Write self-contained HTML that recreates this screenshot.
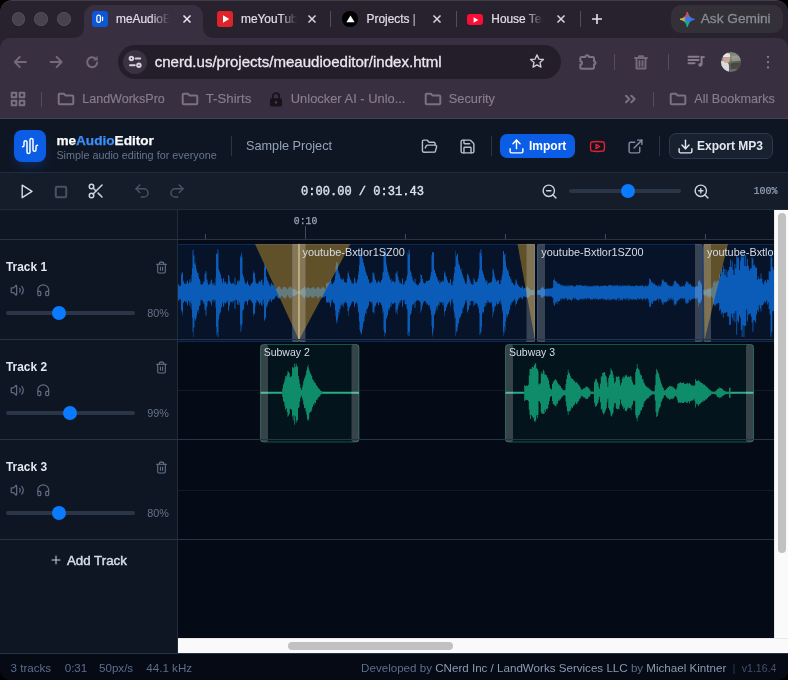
<!DOCTYPE html>
<html><head><meta charset="utf-8"><title>meAudioEditor</title>
<style>
*{box-sizing:border-box;margin:0;padding:0}
html,body{width:788px;height:680px;overflow:hidden;background:#000}
body{font-family:"Liberation Sans",sans-serif;position:relative}
#win{will-change:transform;position:absolute;left:0;top:0;width:788px;height:680px;border-radius:12px 12px 10px 10px;overflow:hidden;background:#060b16}
.abs{position:absolute}
svg{position:absolute;overflow:visible}
.ic{fill:none;stroke-width:2;stroke-linecap:round;stroke-linejoin:round}
.t{position:absolute;white-space:nowrap;line-height:1}
/* chrome */
#tabstrip{left:0;top:0;width:788px;height:52px;background:#28222e}
#toolbar{left:0;top:38px;width:788px;height:81px;background:#382f40;border-radius:10px 10px 0 0}
#chromeline{left:0;top:118px;width:788px;height:1px;background:#4a414f}
.tab{font-size:11.9px;color:#e2dce8;top:13.6px;-webkit-text-stroke:.2px #e2dce8}
.bm{font-size:12.4px;color:#877e90;top:92.5px;-webkit-text-stroke:.15px #877e90}
.sep{position:absolute;width:1px;background:#564c5e}
/* app */
#hdr{left:0;top:119px;width:788px;height:54px;background:#0f1623;border-bottom:1px solid #202c3e}
#tb{left:0;top:173px;width:788px;height:37px;background:#151d2b;border-bottom:1px solid #202c3e}
#left{left:0;top:210px;width:178px;height:443px;background:#0f1623;border-right:1px solid #202c3e}
#tl{left:178px;top:210px;width:596px;height:428px;background:#050a17;overflow:hidden}
.hl{position:absolute;left:0;width:788px;height:1px;background:#1d2a3c}
.tname{font-size:11.9px;font-weight:bold;color:#e2e8f0;left:6px}
.pct{font-size:10.8px;color:#64748b;left:147.3px}
.strk{position:absolute;left:6px;width:129px;height:4px;border-radius:2px;background:#2a3647}
.thumb{position:absolute;width:14px;height:14px;border-radius:7px;background:#0a7aff}
#status{left:0;top:653px;width:788px;height:27px;background:#050a15;border-top:1px solid #25344b}
.st{font-size:11.6px;color:#5d6e8c;top:661.5px}
.st b{font-weight:normal;color:#8a9ab3}
</style></head><body>
<div id="win">
<div id="tabstrip" class="abs"></div>
<div id="toolbar" class="abs"></div>
<!-- traffic lights -->
<div class="abs" style="left:11.5px;top:12.2px;width:13.6px;height:13.6px;border-radius:50%;background:#48424f;border:1px solid #57515e"></div>
<div class="abs" style="left:34.3px;top:12.2px;width:13.6px;height:13.6px;border-radius:50%;background:#48424f;border:1px solid #57515e"></div>
<div class="abs" style="left:57.1px;top:12.2px;width:13.6px;height:13.6px;border-radius:50%;background:#48424f;border:1px solid #57515e"></div>
<!-- active tab -->
<div class="abs" style="left:84px;top:5px;width:119px;height:34px;background:#382f40;border-radius:10px 10px 0 0"></div>
<svg style="left:74px;top:28px" width="10" height="10"><path d="M10 0V10H0A10 10 0 0 0 10 0Z" fill="#382f40"/></svg>
<svg style="left:203px;top:28px" width="10" height="10"><path d="M0 0V10H10A10 10 0 0 1 0 0Z" fill="#382f40"/></svg>
<!-- tab1 favicon -->
<div class="abs" style="left:92.200px;top:11.200px;width:15.600px;height:15.600px;border-radius:3.500px;background:#0b57d8"></div>
<svg style="left:92.200px;top:11.200px" width="15.600" height="15.600" viewBox="0 0 16 16"><rect x="5" y="4.300" width="3.600" height="7.400" rx="1.700" fill="none" stroke="#fff" stroke-width="1.300"/><path d="M10.800 6.300V9.700" stroke="#fff" stroke-width="1.300" stroke-linecap="round"/></svg>
<div class="t tab" style="left:116px;width:55px;overflow:hidden;-webkit-mask-image:linear-gradient(90deg,#000 62%,transparent 98%);mask-image:linear-gradient(90deg,#000 62%,transparent 98%)">meAudioEditor</div>
<svg style="left:183px;top:15px" width="8" height="8" viewBox="0 0 8 8"><path d="M0.5 0.5L7.5 7.5M7.5 0.5L0.5 7.5" stroke="#ece8f0" stroke-width="1.5" fill="none"/></svg>
<!-- tab2 -->
<div class="abs" style="left:217.3px;top:11.2px;width:15.6px;height:15.6px;border-radius:3px;background:#e0232b"></div>
<svg style="left:221.5px;top:15px" width="8" height="8" viewBox="0 0 8 8"><path d="M1 0.3L7.2 4L1 7.7Z" fill="#fff"/></svg>
<div class="t tab" style="left:241px;width:56px;overflow:hidden;-webkit-mask-image:linear-gradient(90deg,#000 70%,transparent 100%);mask-image:linear-gradient(90deg,#000 70%,transparent 100%)">meYouTube</div>
<svg style="left:308px;top:15px" width="8" height="8" viewBox="0 0 8 8"><path d="M0.5 0.5L7.5 7.5M7.5 0.5L0.5 7.5" stroke="#d9d4de" stroke-width="1.5" fill="none"/></svg>
<div class="sep" style="left:330px;top:11px;height:16px"></div>
<!-- tab3 -->
<div class="abs" style="left:342.4px;top:11.4px;width:15.2px;height:15.2px;border-radius:50%;background:#000"></div>
<svg style="left:345.5px;top:15px" width="9" height="8" viewBox="0 0 9 8"><path d="M4.5 0.5L8.6 7.3H0.4Z" fill="#fff"/></svg>
<div class="t tab" style="left:366.5px">Projects <span style="color:#8d8496">|</span></div>
<svg style="left:433px;top:15px" width="8" height="8" viewBox="0 0 8 8"><path d="M0.5 0.5L7.5 7.5M7.5 0.5L0.5 7.5" stroke="#d9d4de" stroke-width="1.5" fill="none"/></svg>
<div class="sep" style="left:455.5px;top:11px;height:16px"></div>
<!-- tab4 -->
<div class="abs" style="left:467.3px;top:13.8px;width:16px;height:11px;border-radius:3px;background:#fc0d35"></div>
<svg style="left:472.8px;top:16.6px" width="6" height="6" viewBox="0 0 6 6"><path d="M0.6 0.2L5.4 3L0.6 5.8Z" fill="#fff"/></svg>
<div class="t tab" style="left:491.3px;width:52px;overflow:hidden;-webkit-mask-image:linear-gradient(90deg,#000 65%,transparent 100%);mask-image:linear-gradient(90deg,#000 65%,transparent 100%)">House Tea</div>
<svg style="left:557px;top:15px" width="8" height="8" viewBox="0 0 8 8"><path d="M0.5 0.5L7.5 7.5M7.5 0.5L0.5 7.5" stroke="#d9d4de" stroke-width="1.5" fill="none"/></svg>
<div class="sep" style="left:579.5px;top:11px;height:16px"></div>
<svg style="left:592px;top:14px" width="10" height="10" viewBox="0 0 10 10"><path d="M5 0V10M0 5H10" stroke="#e6e1ea" stroke-width="1.6" fill="none"/></svg>
<!-- gemini -->
<div class="abs" style="left:671px;top:5px;width:112px;height:28px;border-radius:10px;background:#343038"></div>
<svg style="left:679.700px;top:11.600px" width="14.600" height="14.600" viewBox="0 0 14 14"><defs><radialGradient id="gr" cx="7" cy="0.500" r="6" gradientUnits="userSpaceOnUse"><stop offset="0" stop-color="#f5423a"/><stop offset=".55" stop-color="#f5423a" stop-opacity=".7"/><stop offset="1" stop-color="#f5423a" stop-opacity="0"/></radialGradient><radialGradient id="gy" cx="0.500" cy="7" r="5.500" gradientUnits="userSpaceOnUse"><stop offset="0" stop-color="#fbbc04"/><stop offset=".55" stop-color="#fbbc04" stop-opacity=".8"/><stop offset="1" stop-color="#fbbc04" stop-opacity="0"/></radialGradient><radialGradient id="gn" cx="7" cy="13.500" r="5.500" gradientUnits="userSpaceOnUse"><stop offset="0" stop-color="#0ebc5f"/><stop offset=".55" stop-color="#0ebc5f" stop-opacity=".8"/><stop offset="1" stop-color="#0ebc5f" stop-opacity="0"/></radialGradient></defs><path id="gs" d="M7 0C7.500 3.600 10.400 6.500 14 7C10.400 7.500 7.500 10.400 7 14C6.500 10.400 3.600 7.500 0 7C3.600 6.500 6.500 3.600 7 0Z" fill="#2f7bf6" stroke="#2f7bf6" stroke-width=".8" stroke-linejoin="round"/><path d="M7 0C7.500 3.600 10.400 6.500 14 7C10.400 7.500 7.500 10.400 7 14C6.500 10.400 3.600 7.500 0 7C3.600 6.500 6.500 3.600 7 0Z" fill="url(#gn)" stroke="url(#gn)" stroke-width=".8"/><path d="M7 0C7.500 3.600 10.400 6.500 14 7C10.400 7.500 7.500 10.400 7 14C6.500 10.400 3.600 7.500 0 7C3.600 6.500 6.500 3.600 7 0Z" fill="url(#gy)" stroke="url(#gy)" stroke-width=".8"/><path d="M7 0C7.500 3.600 10.400 6.500 14 7C10.400 7.500 7.500 10.400 7 14C6.500 10.400 3.600 7.500 0 7C3.600 6.500 6.500 3.600 7 0Z" fill="url(#gr)" stroke="url(#gr)" stroke-width=".8"/></svg>
<div class="t" style="left:700.700px;top:11.800px;font-size:13.700px;color:#858c93;-webkit-text-stroke:.3px #858c93">Ask Gemini</div>
<!-- nav -->
<svg class="ic" style="left:13.800px;top:56px" width="12.400" height="12" viewBox="0 0 12.400 12" stroke="#75697c" stroke-width="1.350"><path d="M11.800 6H1.200M5.800 0.900L0.800 6l5 5.100"/></svg>
<svg class="ic" style="left:50px;top:56px" width="12.400" height="12" viewBox="0 0 12.400 12" stroke="#75697c" stroke-width="1.350"><path d="M0.600 6H11.200M6.600 0.900L11.600 6l-5 5.100"/></svg>
<svg class="ic" style="left:86.200px;top:55.800px" width="12.400" height="12.400" viewBox="0 0 12.400 12.400" stroke="#75697c" stroke-width="1.350"><path d="M11.200 6.400a5 5 0 1 1-1.700-3.900"/><path d="M11.400 0.800V4.200H8Z" fill="#75697c" stroke-width="0.600"/></svg>
<!-- url pill -->
<div class="abs" style="left:118.200px;top:45px;width:442.600px;height:34px;border-radius:17px;background:#241e2a"></div>
<div class="abs" style="left:123px;top:50px;width:24px;height:24px;border-radius:50%;background:#3a3142"></div>
<svg class="ic" style="left:129px;top:56.200px" width="12.400" height="12" viewBox="0 0 12.400 12" stroke="#d6d0dc" stroke-width="1.050"><circle cx="2.400" cy="2.600" r="1.750"/><path d="M6.600 2.600H11.200"/><circle cx="9.900" cy="9.200" r="1.750"/><path d="M1 9.200H5.800"/></svg>
<div class="t" style="left:154.700px;top:54.300px;font-size:15.050px;color:#ebe6ef;-webkit-text-stroke:.3px #ebe6ef">cnerd.us/projects/meaudioeditor/index.html</div>
<svg class="ic" style="left:528.800px;top:53.300px" width="16" height="16" viewBox="0 0 24 24" stroke="#d2cbd8" stroke-width="1.900" stroke-linejoin="miter"><path d="M12 2.800l2.800 6.300 6.900.700-5.200 4.600 1.500 6.800L12 17.700 6 21.200l1.500-6.800L2.300 9.800l6.900-.700z"/></svg>
<!-- right icons -->
<svg class="ic" style="left:579px;top:52.600px" width="18" height="17" viewBox="0 0 18 17" stroke="#7d7386" stroke-width="1.350"><path d="M1.300 5.200a1.200 1.200 0 0 1 1.200-1.200H6.400a1.700 1.700 0 0 1 3.400 0H13.800a1.200 1.200 0 0 1 1.200 1.200V8.200a1.500 1.500 0 0 1 0 3V14.500a1.200 1.200 0 0 1-1.200 1.200H2.500a1.200 1.200 0 0 1-1.200-1.200V11.600a1.700 1.700 0 0 0 0-3.400Z"/></svg>
<div class="sep" style="left:613.500px;top:54px;height:16px"></div>
<svg class="ic" style="left:634px;top:54.500px" width="14" height="15" viewBox="0 0 14 15" stroke="#75697c" stroke-width="1.5"><path d="M1 3H13M5 3V1.200H9V3M2.500 3V13.500H11.500V3M5.500 6V11M8.500 6V11"/></svg>
<div class="sep" style="left:667.500px;top:54px;height:16px"></div>
<svg class="ic" style="left:688px;top:54.500px" width="16" height="14" viewBox="0 0 16 14" stroke="#857b8e" stroke-width="1.250" stroke-linecap="butt"><path d="M0.500 1.800H10.500M0.500 5H10.500M0.500 8.200H6.500"/><path d="M13.600 1.800V9.500" /><path d="M13.600 2.200H16" stroke-width="1.800"/><circle cx="12.200" cy="9.800" r="1.900" fill="#857b8e" stroke="none"/></svg>
<div class="abs" style="left:720.800px;top:51.500px;width:20.500px;height:20.500px;border-radius:50%;background:linear-gradient(160deg,#6f7a68 0%,#8b8f86 35%,#55594f 60%,#7b7680 100%);overflow:hidden"><div class="abs" style="left:-2px;top:9px;width:10px;height:14px;background:#dcdadd;border-radius:4px 5px 0 0"></div><div class="abs" style="left:2.500px;top:3px;width:7px;height:8px;border-radius:50%;background:#c9a594"></div><div class="abs" style="left:2px;top:1.500px;width:7px;height:3.500px;border-radius:50% 50% 0 0;background:#e6e3e6"></div><div class="abs" style="left:10px;top:11px;width:11px;height:6px;background:#3d4038;opacity:.7"></div><div class="abs" style="left:11px;top:4px;width:9px;height:5px;background:#a9a99f;opacity:.6"></div></div>
<svg style="left:765.500px;top:54.800px" width="4" height="15" viewBox="0 0 4 15"><circle cx="2" cy="1.900" r="1.150" fill="#857b8e"/><circle cx="2" cy="7.200" r="1.150" fill="#857b8e"/><circle cx="2" cy="12.500" r="1.150" fill="#857b8e"/></svg>
<!-- bookmarks -->
<svg class="ic" style="left:11px;top:92px" width="14" height="14" viewBox="0 0 14 14" stroke="#7b7184" stroke-width="1.4" stroke-linejoin="miter"><rect x="0.700" y="0.700" width="4.600" height="4.600"/><rect x="8.700" y="0.700" width="4.600" height="4.600"/><rect x="0.700" y="8.700" width="4.600" height="4.600"/><rect x="8.700" y="8.700" width="4.600" height="4.600"/></svg>
<div class="sep" style="left:40.500px;top:91.500px;height:15px"></div>
<svg class="ic fld" style="left:58px;top:93px" width="16" height="12" viewBox="0 0 16 12" stroke="#7b7184" stroke-width="1.4"><path d="M0.700 1.700a1 1 0 0 1 1-1H5.800L7.600 2.500H14.300a1 1 0 0 1 1 1V10.300a1 1 0 0 1-1 1H1.700a1 1 0 0 1-1-1Z"/></svg>
<div class="t bm" style="left:82.300px;font-size:12.500px;top:93.100px">LandWorksPro</div>
<svg class="ic fld" style="left:182px;top:93px" width="16" height="12" viewBox="0 0 16 12" stroke="#7b7184" stroke-width="1.4"><path d="M0.700 1.700a1 1 0 0 1 1-1H5.800L7.600 2.500H14.300a1 1 0 0 1 1 1V10.300a1 1 0 0 1-1 1H1.700a1 1 0 0 1-1-1Z"/></svg>
<div class="t bm" style="left:205.800px;font-size:13.200px;top:92.100px">T-Shirts</div>
<svg style="left:268.500px;top:91.500px" width="14" height="15" viewBox="0 0 14 15"><path d="M3.800 7V4.400a3.200 3.200 0 0 1 6.400 0V7" fill="none" stroke="#17131b" stroke-width="1.700"/><rect x="1" y="6.300" width="12" height="8.200" rx="1.500" fill="#17131b"/><circle cx="7" cy="10.400" r="1.200" fill="#4a4152"/></svg>
<div class="t bm" style="left:290.800px;font-size:12.900px;top:93.100px">Unlocker AI - Unlo...</div>
<svg class="ic fld" style="left:425px;top:93px" width="16" height="12" viewBox="0 0 16 12" stroke="#7b7184" stroke-width="1.4"><path d="M0.700 1.700a1 1 0 0 1 1-1H5.800L7.600 2.500H14.300a1 1 0 0 1 1 1V10.300a1 1 0 0 1-1 1H1.700a1 1 0 0 1-1-1Z"/></svg>
<div class="t bm" style="left:448.800px;font-size:12.800px;top:93.200px">Security</div>
<svg class="ic" style="left:624.500px;top:95px" width="11" height="8" viewBox="0 0 11 8" stroke="#7b7184" stroke-width="1.3"><path d="M1 0.700L4.300 4L1 7.300M6.300 0.700L9.600 4L6.300 7.300"/></svg>
<div class="sep" style="left:652.500px;top:91.500px;height:15px"></div>
<svg class="ic fld" style="left:670px;top:93px" width="16" height="12" viewBox="0 0 16 12" stroke="#7b7184" stroke-width="1.4"><path d="M0.700 1.700a1 1 0 0 1 1-1H5.800L7.600 2.500H14.300a1 1 0 0 1 1 1V10.300a1 1 0 0 1-1 1H1.700a1 1 0 0 1-1-1Z"/></svg>
<div class="t bm" style="left:694.300px;font-size:12.600px;top:93.300px">All Bookmarks</div>
<div id="chromeline" class="abs"></div>

<div id="edge" class="abs" style="left:0;top:0;width:788px;height:119px;border-top:1px solid rgba(255,255,255,.12);border-radius:12px 12px 0 0;pointer-events:none"></div>

<div id="hdr" class="abs"></div>
<div id="tb" class="abs"></div>
<!-- header -->
<div class="abs" style="left:14px;top:130px;width:32px;height:32px;border-radius:8px;background:#0b5de6;box-shadow:0 6px 12px -3px rgba(11,93,230,.35)"></div>
<svg class="ic" style="left:21px;top:137px" width="18" height="18" viewBox="0 0 24 24" stroke="#fff"><path d="M2 13a2 2 0 0 0 2-2V7a2 2 0 0 1 4 0v13a2 2 0 0 0 4 0V4a2 2 0 0 1 4 0v13a2 2 0 0 0 4 0v-4a2 2 0 0 1 2-2"/></svg>
<div class="t" style="left:56.400px;top:133.800px;font-size:13.600px;font-weight:bold;color:#f8fafc;-webkit-text-stroke:.25px currentColor">me<span style="color:#3b8ff8">Audio</span>Editor</div>
<div class="t" style="left:56.400px;top:149.500px;font-size:10.800px;color:#64748b">Simple audio editing for everyone</div>
<div class="abs" style="left:231px;top:136px;width:1px;height:20px;background:#2a3648"></div>
<div class="t" style="left:246px;top:139.500px;font-size:12.700px;color:#94a3b8">Sample Project</div>
<svg class="ic" style="left:420.500px;top:137.500px" width="17" height="17" viewBox="0 0 24 24" stroke="#b4bfce" stroke-width="1.750"><path d="m6 14 1.500-2.900A2 2 0 0 1 9.240 10H20a2 2 0 0 1 1.940 2.500l-1.540 6a2 2 0 0 1-1.950 1.500H4a2 2 0 0 1-2-2V5a2 2 0 0 1 2-2h3.900a2 2 0 0 1 1.690.900l.810 1.200a2 2 0 0 0 1.670.900H18a2 2 0 0 1 2 2v2"/></svg>
<svg class="ic" style="left:458.500px;top:137.500px" width="17" height="17" viewBox="0 0 24 24" stroke="#b4bfce" stroke-width="1.750"><path d="M15.200 3a2 2 0 0 1 1.400.600l3.800 3.800a2 2 0 0 1 .600 1.400V19a2 2 0 0 1-2 2H5a2 2 0 0 1-2-2V5a2 2 0 0 1 2-2z"/><path d="M17 21v-7a1 1 0 0 0-1-1H8a1 1 0 0 0-1 1v7"/><path d="M7 3v4a1 1 0 0 0 1 1h7"/></svg>
<div class="abs" style="left:491px;top:136px;width:1px;height:20px;background:#2a3648"></div>
<div class="abs" style="left:500px;top:134px;width:75px;height:24px;border-radius:7px;background:#0b5de6"></div>
<svg class="ic" style="left:507.500px;top:137.500px" width="17" height="17" viewBox="0 0 24 24" stroke="#fff"><path d="M21 15v4a2 2 0 0 1-2 2H5a2 2 0 0 1-2-2v-4"/><polyline points="17 8 12 3 7 8"/><line x1="12" x2="12" y1="3" y2="15"/></svg>
<div class="t" style="left:529px;top:139.800px;font-size:12px;font-weight:bold;color:#fff">Import</div>
<svg class="ic" style="left:588.500px;top:137.500px" width="17" height="17" viewBox="0 0 24 24" stroke="#e0212f" stroke-width="1.750"><path d="M2.500 17a24.120 24.120 0 0 1 0-10 2 2 0 0 1 1.400-1.400 49.560 49.560 0 0 1 16.200 0A2 2 0 0 1 21.500 7a24.120 24.120 0 0 1 0 10 2 2 0 0 1-1.400 1.400 49.550 49.550 0 0 1-16.200 0A2 2 0 0 1 2.500 17"/><path d="m10 15 5-3-5-3z"/></svg>
<svg class="ic" style="left:626.800px;top:137.500px" width="17" height="17" viewBox="0 0 24 24" stroke="#7f8da3" stroke-width="1.750"><path d="M15 3h6v6"/><path d="M10 14 21 3"/><path d="M18 13v6a2 2 0 0 1-2 2H5a2 2 0 0 1-2-2V8a2 2 0 0 1 2-2h6"/></svg>
<div class="abs" style="left:659px;top:136px;width:1px;height:20px;background:#2a3648"></div>
<div class="abs" style="left:668.500px;top:133.300px;width:104.300px;height:25.400px;border-radius:7px;background:#18212f;border:1px solid #2c394c"></div>
<svg class="ic" style="left:676.500px;top:137.500px" width="17" height="17" viewBox="0 0 24 24" stroke="#e2e8f0"><path d="M21 15v4a2 2 0 0 1-2 2H5a2 2 0 0 1-2-2v-4"/><polyline points="7 10 12 15 17 10"/><line x1="12" x2="12" y1="15" y2="3"/></svg>
<div class="t" style="left:697px;top:139.800px;font-size:12px;font-weight:bold;color:#e2e8f0">Export MP3</div>
<!-- toolbar -->
<svg class="ic" style="left:18.100px;top:183.100px" width="16.800" height="16.800" viewBox="0 0 24 24" stroke="#d3dbe6" stroke-width="1.800"><polygon points="6 3 20 12 6 21 6 3"/></svg>
<svg class="ic" style="left:54.800px;top:185.600px" width="12" height="12" viewBox="0 0 12 12" stroke="#465266" stroke-width="1.500"><rect x="0.800" y="0.800" width="10.400" height="10.400" rx="1.300"/></svg>
<svg class="ic" style="left:87px;top:182.400px" width="18" height="18" viewBox="0 0 24 24" stroke="#cbd5e1" stroke-width="1.700"><circle cx="6" cy="6" r="3"/><path d="M8.120 8.120 12 12"/><path d="M20 4 8.120 15.880"/><circle cx="6" cy="18" r="3"/><path d="M14.800 14.800 20 20"/></svg>
<svg class="ic" style="left:132.500px;top:182.400px" width="18" height="18" viewBox="0 0 24 24" stroke="#465266" stroke-width="1.700"><path d="M9 14 4 9l5-5"/><path d="M4 9h10.500a5.500 5.500 0 0 1 5.500 5.500a5.500 5.500 0 0 1-5.500 5.500H11"/></svg>
<svg class="ic" style="left:168px;top:182.400px" width="18" height="18" viewBox="0 0 24 24" stroke="#465266" stroke-width="1.700"><path d="m15 14 5-5-5-5"/><path d="M20 9H9.500A5.500 5.500 0 0 0 4 14.500A5.500 5.500 0 0 0 9.500 20H13"/></svg>
<div class="t" style="left:301px;top:185.800px;font-size:12.060px;font-family:'Liberation Mono',monospace;color:#dde4ee;-webkit-text-stroke:.35px #dde4ee">0:00.00 / 0:31.43</div>
<svg class="ic" style="left:540.500px;top:182.800px" width="17" height="17" viewBox="0 0 24 24" stroke="#cbd5e1" stroke-width="1.700"><circle cx="11" cy="11" r="8"/><line x1="21" x2="16.650" y1="21" y2="16.650"/><line x1="8" x2="14" y1="11" y2="11"/></svg>
<div class="abs" style="left:569px;top:189.200px;width:112px;height:4px;border-radius:2px;background:#2a3647"></div>
<div class="thumb" style="left:621px;top:184.300px"></div>
<svg class="ic" style="left:692.500px;top:182.800px" width="17" height="17" viewBox="0 0 24 24" stroke="#cbd5e1" stroke-width="1.700"><circle cx="11" cy="11" r="8"/><line x1="21" x2="16.650" y1="21" y2="16.650"/><line x1="8" x2="14" y1="11" y2="11"/><line x1="11" x2="11" y1="8" y2="14"/></svg>
<div class="t" style="left:753.400px;top:186.800px;font-size:10px;font-family:'Liberation Mono',monospace;color:#94a3b8;-webkit-text-stroke:.2px #94a3b8">100%</div>
<!-- left panel -->
<div id="left" class="abs"></div>
<div class="t tname" style="top:261.7px">Track 1</div>
<svg class="ic" style="left:154.500px;top:260.6px" width="13" height="13" viewBox="0 0 24 24" stroke="#64748b" stroke-width="1.900"><path d="M3 6h18"/><path d="M19 6v14c0 1-1 2-2 2H7c-1 0-2-1-2-2V6"/><path d="M8 6V4c0-1 1-2 2-2h4c1 0 2 1 2 2v2"/><line x1="10" x2="10" y1="11" y2="17"/><line x1="14" x2="14" y1="11" y2="17"/></svg>
<svg class="ic" style="left:9.6px;top:283.0px" width="14.5" height="14.5" viewBox="0 0 24 24" stroke="#5f6d84" stroke-width="1.8"><path d="M11 4.702a.705.705 0 0 0-1.203-.498L6.413 7.587A1.4 1.4 0 0 1 5.416 8H3a1 1 0 0 0-1 1v6a1 1 0 0 0 1 1h2.416a1.4 1.4 0 0 1 .997.413l3.383 3.384A.705.705 0 0 0 11 19.298z"/><path d="M16 9a5 5 0 0 1 0 6"/><path d="M19.364 18.364a9 9 0 0 0 0-12.728"/></svg>
<svg class="ic" style="left:35.7px;top:283.0px" width="14.5" height="14.5" viewBox="0 0 24 24" stroke="#5f6d84" stroke-width="1.8"><path d="M3 14h3a2 2 0 0 1 2 2v3a2 2 0 0 1-2 2H5a2 2 0 0 1-2-2v-7a9 9 0 0 1 18 0v7a2 2 0 0 1-2 2h-1a2 2 0 0 1-2-2v-3a2 2 0 0 1 2-2h3"/></svg>
<div class="strk" style="top:311.1px"></div>
<div class="thumb" style="left:52px;top:306.1px"></div>
<div class="t pct" style="top:307.7px">80%</div>
<div class="t tname" style="top:361.7px">Track 2</div>
<svg class="ic" style="left:154.500px;top:360.6px" width="13" height="13" viewBox="0 0 24 24" stroke="#64748b" stroke-width="1.900"><path d="M3 6h18"/><path d="M19 6v14c0 1-1 2-2 2H7c-1 0-2-1-2-2V6"/><path d="M8 6V4c0-1 1-2 2-2h4c1 0 2 1 2 2v2"/><line x1="10" x2="10" y1="11" y2="17"/><line x1="14" x2="14" y1="11" y2="17"/></svg>
<svg class="ic" style="left:9.6px;top:383.0px" width="14.5" height="14.5" viewBox="0 0 24 24" stroke="#5f6d84" stroke-width="1.8"><path d="M11 4.702a.705.705 0 0 0-1.203-.498L6.413 7.587A1.4 1.4 0 0 1 5.416 8H3a1 1 0 0 0-1 1v6a1 1 0 0 0 1 1h2.416a1.4 1.4 0 0 1 .997.413l3.383 3.384A.705.705 0 0 0 11 19.298z"/><path d="M16 9a5 5 0 0 1 0 6"/><path d="M19.364 18.364a9 9 0 0 0 0-12.728"/></svg>
<svg class="ic" style="left:35.7px;top:383.0px" width="14.5" height="14.5" viewBox="0 0 24 24" stroke="#5f6d84" stroke-width="1.8"><path d="M3 14h3a2 2 0 0 1 2 2v3a2 2 0 0 1-2 2H5a2 2 0 0 1-2-2v-7a9 9 0 0 1 18 0v7a2 2 0 0 1-2 2h-1a2 2 0 0 1-2-2v-3a2 2 0 0 1 2-2h3"/></svg>
<div class="strk" style="top:411.1px"></div>
<div class="thumb" style="left:63px;top:406.1px"></div>
<div class="t pct" style="top:407.7px">99%</div>
<div class="t tname" style="top:461.7px">Track 3</div>
<svg class="ic" style="left:154.500px;top:460.6px" width="13" height="13" viewBox="0 0 24 24" stroke="#64748b" stroke-width="1.900"><path d="M3 6h18"/><path d="M19 6v14c0 1-1 2-2 2H7c-1 0-2-1-2-2V6"/><path d="M8 6V4c0-1 1-2 2-2h4c1 0 2 1 2 2v2"/><line x1="10" x2="10" y1="11" y2="17"/><line x1="14" x2="14" y1="11" y2="17"/></svg>
<svg class="ic" style="left:9.6px;top:483.0px" width="14.5" height="14.5" viewBox="0 0 24 24" stroke="#5f6d84" stroke-width="1.8"><path d="M11 4.702a.705.705 0 0 0-1.203-.498L6.413 7.587A1.4 1.4 0 0 1 5.416 8H3a1 1 0 0 0-1 1v6a1 1 0 0 0 1 1h2.416a1.4 1.4 0 0 1 .997.413l3.383 3.384A.705.705 0 0 0 11 19.298z"/><path d="M16 9a5 5 0 0 1 0 6"/><path d="M19.364 18.364a9 9 0 0 0 0-12.728"/></svg>
<svg class="ic" style="left:35.7px;top:483.0px" width="14.5" height="14.5" viewBox="0 0 24 24" stroke="#5f6d84" stroke-width="1.8"><path d="M3 14h3a2 2 0 0 1 2 2v3a2 2 0 0 1-2 2H5a2 2 0 0 1-2-2v-7a9 9 0 0 1 18 0v7a2 2 0 0 1-2 2h-1a2 2 0 0 1-2-2v-3a2 2 0 0 1 2-2h3"/></svg>
<div class="strk" style="top:511.1px"></div>
<div class="thumb" style="left:52px;top:506.1px"></div>
<div class="t pct" style="top:507.7px">80%</div>
<svg class="ic" style="left:50px;top:554.3px" width="12" height="12" viewBox="0 0 24 24" stroke="#cbd5e1" stroke-width="2.2"><path d="M4 12h16"/><path d="M12 4v16"/></svg>
<div class="t" style="left:67px;top:553.500px;font-size:13.300px;color:#d5dde8;-webkit-text-stroke:.45px #d5dde8">Add Track</div>
<!-- timeline -->
<div id="tl" class="abs"></div>
<div class="abs" style="left:178px;top:210px;width:596px;height:29px;background:#0c1320"></div>
<svg style="left:0;top:0" width="788" height="680" viewBox="0 0 788 680">
<svg x="178" y="210" width="596" height="428" viewBox="178 210 596 428" style="overflow:hidden;position:static">
<!-- faint centre lines -->
<g stroke="#121a28" stroke-width="1"><path d="M178 390.500H774M178 490.500H774"/></g>
<!-- ruler ticks -->
<g stroke="#3c4b64" stroke-width="1"><path d="M205.500 234V239M405.500 234V239M505.500 234V239M605.500 234V239M705.500 234V239M305.500 226V239"/></g>
<!-- track1 clips -->
<rect x="160" y="244.500" width="145" height="97" fill="#061328" stroke="#0b2a5a" stroke-width="1"/>
<rect x="292.500" y="244.500" width="242" height="97" rx="2" fill="#061328" stroke="#0b2a5a" stroke-width="1"/>
<rect x="537.500" y="244.500" width="165" height="97" rx="3" fill="#061328" stroke="#0b2a5a" stroke-width="1"/>
<rect x="703.500" y="244.500" width="90" height="97" rx="3" fill="#061328" stroke="#0b2a5a" stroke-width="1"/>
<path d="M178.0 284.4L178.5 284.4L178.5 284.3L179.0 284.3L179.0 285.4L179.5 285.4L179.5 286.0L180.0 286.0L180.0 285.5L180.5 285.5L180.5 285.9L181.0 285.9L181.0 274.9L181.5 274.9L181.5 272.8L182.0 272.8L182.0 271.9L182.5 271.9L182.5 273.0L183.0 273.0L183.0 280.5L183.5 280.5L183.5 281.4L184.0 281.4L184.0 283.3L184.5 283.3L184.5 283.9L185.0 283.9L185.0 283.5L185.5 283.5L185.5 283.8L186.0 283.8L186.0 284.1L186.5 284.1L186.5 281.5L187.0 281.5L187.0 280.5L187.5 280.5L187.5 280.8L188.0 280.8L188.0 283.7L188.5 283.7L188.5 283.3L189.0 283.3L189.0 281.9L189.5 281.9L189.5 279.4L190.0 279.4L190.0 279.1L190.5 279.1L190.5 282.9L191.0 282.9L191.0 281.6L191.5 281.6L191.5 274.9L192.0 274.9L192.0 268.2L192.5 268.2L192.5 250.5L193.0 250.5L193.0 255.5L193.5 255.5L193.5 249.2L194.0 249.2L194.0 255.3L194.5 255.3L194.5 263.8L195.0 263.8L195.0 261.9L195.5 261.9L195.5 265.0L196.0 265.0L196.0 268.5L196.5 268.5L196.5 270.5L197.0 270.5L197.0 272.3L197.5 272.3L197.5 273.7L198.0 273.7L198.0 273.0L198.5 273.0L198.5 276.9L199.0 276.9L199.0 278.9L199.5 278.9L199.5 279.2L200.0 279.2L200.0 281.1L200.5 281.1L200.5 284.2L201.0 284.2L201.0 284.5L201.5 284.5L201.5 284.8L202.0 284.8L202.0 284.5L202.5 284.5L202.5 283.7L203.0 283.7L203.0 282.8L203.5 282.8L203.5 281.2L204.0 281.2L204.0 281.7L204.5 281.7L204.5 273.6L205.0 273.6L205.0 271.0L205.5 271.0L205.5 273.4L206.0 273.4L206.0 271.6L206.5 271.6L206.5 279.4L207.0 279.4L207.0 279.6L207.5 279.6L207.5 282.4L208.0 282.4L208.0 284.8L208.5 284.8L208.5 284.7L209.0 284.7L209.0 284.4L209.5 284.4L209.5 283.5L210.0 283.5L210.0 283.8L210.5 283.8L210.5 280.9L211.0 280.9L211.0 279.8L211.5 279.8L211.5 279.6L212.0 279.6L212.0 282.8L212.5 282.8L212.5 284.7L213.0 284.7L213.0 284.6L213.5 284.6L213.5 282.9L214.0 282.9L214.0 282.2L214.5 282.2L214.5 285.8L215.0 285.8L215.0 285.0L215.5 285.0L215.5 277.5L216.0 277.5L216.0 253.2L216.5 253.2L216.5 254.1L217.0 254.1L217.0 249.0L217.5 249.0L217.5 254.1L218.0 254.1L218.0 250.6L218.5 250.6L218.5 268.5L219.0 268.5L219.0 271.5L219.5 271.5L219.5 270.8L220.0 270.8L220.0 272.9L220.5 272.9L220.5 274.9L221.0 274.9L221.0 278.1L221.5 278.1L221.5 278.8L222.0 278.8L222.0 281.9L222.5 281.9L222.5 283.2L223.0 283.2L223.0 278.3L223.5 278.3L223.5 278.4L224.0 278.4L224.0 283.2L224.5 283.2L224.5 281.2L225.0 281.2L225.0 281.6L225.5 281.6L225.5 281.8L226.0 281.8L226.0 282.8L226.5 282.8L226.5 284.0L227.0 284.0L227.0 284.7L227.5 284.7L227.5 282.3L228.0 282.3L228.0 274.9L228.5 274.9L228.5 275.1L229.0 275.1L229.0 276.2L229.5 276.2L229.5 280.7L230.0 280.7L230.0 282.4L230.5 282.4L230.5 282.7L231.0 282.7L231.0 284.0L231.5 284.0L231.5 283.7L232.0 283.7L232.0 283.7L232.5 283.7L232.5 282.7L233.0 282.7L233.0 282.8L233.5 282.8L233.5 283.6L234.0 283.6L234.0 284.7L234.5 284.7L234.5 277.5L235.0 277.5L235.0 277.8L235.5 277.8L235.5 285.1L236.0 285.1L236.0 284.6L236.5 284.6L236.5 284.6L237.0 284.6L237.0 280.6L237.5 280.6L237.5 281.2L238.0 281.2L238.0 279.9L238.5 279.9L238.5 282.7L239.0 282.7L239.0 281.0L239.5 281.0L239.5 280.2L240.0 280.2L240.0 255.8L240.5 255.8L240.5 257.8L241.0 257.8L241.0 254.8L241.5 254.8L241.5 252.2L242.0 252.2L242.0 257.0L242.5 257.0L242.5 274.0L243.0 274.0L243.0 275.9L243.5 275.9L243.5 277.3L244.0 277.3L244.0 279.6L244.5 279.6L244.5 281.9L245.0 281.9L245.0 284.2L245.5 284.2L245.5 282.8L246.0 282.8L246.0 283.5L246.5 283.5L246.5 283.0L247.0 283.0L247.0 280.8L247.5 280.8L247.5 281.2L248.0 281.2L248.0 284.1L248.5 284.1L248.5 284.6L249.0 284.6L249.0 285.9L249.5 285.9L249.5 285.4L250.0 285.4L250.0 285.5L250.5 285.5L250.5 284.4L251.0 284.4L251.0 283.7L251.5 283.7L251.5 283.4L252.0 283.4L252.0 282.6L252.5 282.6L252.5 282.3L253.0 282.3L253.0 273.5L253.5 273.5L253.5 270.8L254.0 270.8L254.0 272.4L254.5 272.4L254.5 273.1L255.0 273.1L255.0 278.3L255.5 278.3L255.5 281.8L256.0 281.8L256.0 282.7L256.5 282.7L256.5 284.1L257.0 284.1L257.0 283.6L257.5 283.6L257.5 283.3L258.0 283.3L258.0 283.7L258.5 283.7L258.5 281.4L259.0 281.4L259.0 280.6L259.5 280.6L259.5 281.7L260.0 281.7L260.0 281.5L260.5 281.5L260.5 281.8L261.0 281.8L261.0 280.1L261.5 280.1L261.5 279.9L262.0 279.9L262.0 279.1L262.5 279.1L262.5 284.5L263.0 284.5L263.0 285.6L263.5 285.6L263.5 281.9L264.0 281.9L264.0 267.5L264.5 267.5L264.5 263.9L265.0 263.9L265.0 265.8L265.5 265.8L265.5 265.9L266.0 265.9L266.0 276.6L266.5 276.6L266.5 277.0L267.0 277.0L267.0 279.7L267.5 279.7L267.5 280.6L268.0 280.6L268.0 281.7L268.5 281.7L268.5 283.5L269.0 283.5L269.0 283.8L269.5 283.8L269.5 285.4L270.0 285.4L270.0 286.2L270.5 286.2L270.5 285.5L271.0 285.5L271.0 282.7L271.5 282.7L271.5 283.5L272.0 283.5L272.0 284.6L272.5 284.6L272.5 284.6L273.0 284.6L273.0 285.4L273.5 285.4L273.5 285.1L274.0 285.1L274.0 286.0L274.5 286.0L274.5 287.1L275.0 287.1L275.0 288.0L275.5 288.0L275.5 289.0L276.0 289.0L276.0 289.1L276.5 289.1L276.5 288.5L277.0 288.5L277.0 287.7L277.5 287.7L277.5 287.5L278.0 287.5L278.0 286.7L278.5 286.7L278.5 286.3L279.0 286.3L279.0 286.4L279.5 286.4L279.5 286.8L280.0 286.8L280.0 287.2L280.5 287.2L280.5 288.3L281.0 288.3L281.0 289.1L281.5 289.1L281.5 289.3L282.0 289.3L282.0 288.9L282.5 288.9L282.5 288.2L283.0 288.2L283.0 287.1L283.5 287.1L283.5 286.7L284.0 286.7L284.0 286.8L284.5 286.8L284.5 287.2L285.0 287.2L285.0 286.7L285.5 286.7L285.5 286.9L286.0 286.9L286.0 287.9L286.5 287.9L286.5 288.6L287.0 288.6L287.0 289.6L287.5 289.6L287.5 289.3L288.0 289.3L288.0 288.2L288.5 288.2L288.5 287.6L289.0 287.6L289.0 287.4L289.5 287.4L289.5 286.5L290.0 286.5L290.0 286.3L290.5 286.3L290.5 287.3L291.0 287.3L291.0 287.2L291.5 287.2L291.5 287.8L292.0 287.8L292.0 288.3L292.5 288.3L292.5 289.0L293.0 289.0L293.0 289.2L293.5 289.2L293.5 288.8L294.0 288.8L294.0 288.6L294.5 288.6L294.5 289.3L295.0 289.3L295.0 289.5L295.5 289.5L295.5 289.7L296.0 289.7L296.0 290.2L296.5 290.2L296.5 290.6L297.0 290.6L297.0 291.0L297.5 291.0L297.5 291.3L298.0 291.3L298.0 291.7L298.5 291.7L298.5 291.7L299.0 291.7L299.0 293.4L298.5 293.4L298.5 293.3L298.0 293.3L298.0 293.8L297.5 293.8L297.5 294.0L297.0 294.0L297.0 294.4L296.5 294.4L296.5 295.0L296.0 295.0L296.0 295.5L295.5 295.5L295.5 295.2L295.0 295.2L295.0 295.4L294.5 295.4L294.5 296.3L294.0 296.3L294.0 296.1L293.5 296.1L293.5 296.0L293.0 296.0L293.0 295.6L292.5 295.6L292.5 296.6L292.0 296.6L292.0 297.2L291.5 297.2L291.5 298.2L291.0 298.2L291.0 298.4L290.5 298.4L290.5 298.2L290.0 298.2L290.0 299.2L289.5 299.2L289.5 297.2L289.0 297.2L289.0 297.0L288.5 297.0L288.5 296.8L288.0 296.8L288.0 295.3L287.5 295.3L287.5 295.1L287.0 295.1L287.0 296.6L286.5 296.6L286.5 297.4L286.0 297.4L286.0 297.6L285.5 297.6L285.5 298.8L285.0 298.8L285.0 297.4L284.5 297.4L284.5 298.4L284.0 298.4L284.0 297.8L283.5 297.8L283.5 297.8L283.0 297.8L283.0 296.4L282.5 296.4L282.5 296.3L282.0 296.3L282.0 295.5L281.5 295.5L281.5 296.3L281.0 296.3L281.0 297.1L280.5 297.1L280.5 297.6L280.0 297.6L280.0 298.6L279.5 298.6L279.5 298.2L279.0 298.2L279.0 298.8L278.5 298.8L278.5 298.3L278.0 298.3L278.0 297.7L277.5 297.7L277.5 296.9L277.0 296.9L277.0 296.4L276.5 296.4L276.5 295.8L276.0 295.8L276.0 295.7L275.5 295.7L275.5 297.0L275.0 297.0L275.0 298.2L274.5 298.2L274.5 299.1L274.0 299.1L274.0 299.6L273.5 299.6L273.5 299.1L273.0 299.1L273.0 299.5L272.5 299.5L272.5 299.8L272.0 299.8L272.0 301.8L271.5 301.8L271.5 301.9L271.0 301.9L271.0 300.2L270.5 300.2L270.5 298.7L270.0 298.7L270.0 299.5L269.5 299.5L269.5 302.0L269.0 302.0L269.0 301.3L268.5 301.3L268.5 302.2L268.0 302.2L268.0 304.3L267.5 304.3L267.5 306.2L267.0 306.2L267.0 308.0L266.5 308.0L266.5 306.6L266.0 306.6L266.0 319.1L265.5 319.1L265.5 317.4L265.0 317.4L265.0 321.3L264.5 321.3L264.5 319.7L264.0 319.7L264.0 304.1L263.5 304.1L263.5 299.2L263.0 299.2L263.0 300.6L262.5 300.6L262.5 306.0L262.0 306.0L262.0 305.8L261.5 305.8L261.5 305.0L261.0 305.0L261.0 302.2L260.5 302.2L260.5 303.4L260.0 303.4L260.0 303.7L259.5 303.7L259.5 305.0L259.0 305.0L259.0 302.6L258.5 302.6L258.5 302.0L258.0 302.0L258.0 301.0L257.5 301.0L257.5 300.5L257.0 300.5L257.0 299.9L256.5 299.9L256.5 302.9L256.0 302.9L256.0 303.0L255.5 303.0L255.5 306.3L255.0 306.3L255.0 313.8L254.5 313.8L254.5 314.0L254.0 314.0L254.0 316.5L253.5 316.5L253.5 313.4L253.0 313.4L253.0 303.3L252.5 303.3L252.5 303.1L252.0 303.1L252.0 300.9L251.5 300.9L251.5 301.2L251.0 301.2L251.0 301.1L250.5 301.1L250.5 299.6L250.0 299.6L250.0 300.3L249.5 300.3L249.5 299.0L249.0 299.0L249.0 300.8L248.5 300.8L248.5 300.1L248.0 300.1L248.0 304.6L247.5 304.6L247.5 304.9L247.0 304.9L247.0 302.1L246.5 302.1L246.5 301.1L246.0 301.1L246.0 301.4L245.5 301.4L245.5 300.7L245.0 300.7L245.0 302.3L244.5 302.3L244.5 304.5L244.0 304.5L244.0 309.2L243.5 309.2L243.5 309.7L243.0 309.7L243.0 310.8L242.5 310.8L242.5 323.9L242.0 323.9L242.0 330.4L241.5 330.4L241.5 325.9L241.0 325.9L241.0 323.9L240.5 323.9L240.5 331.9L240.0 331.9L240.0 305.0L239.5 305.0L239.5 302.8L239.0 302.8L239.0 301.1L238.5 301.1L238.5 305.0L238.0 305.0L238.0 304.7L237.5 304.7L237.5 304.4L237.0 304.4L237.0 300.3L236.5 300.3L236.5 299.9L236.0 299.9L236.0 299.3L235.5 299.3L235.5 308.7L235.0 308.7L235.0 308.7L234.5 308.7L234.5 300.3L234.0 300.3L234.0 301.0L233.5 301.0L233.5 302.0L233.0 302.0L233.0 303.2L232.5 303.2L232.5 301.1L232.0 301.1L232.0 301.6L231.5 301.6L231.5 301.9L231.0 301.9L231.0 302.6L230.5 302.6L230.5 301.7L230.0 301.7L230.0 304.8L229.5 304.8L229.5 306.8L229.0 306.8L229.0 311.6L228.5 311.6L228.5 310.1L228.0 310.1L228.0 302.0L227.5 302.0L227.5 300.5L227.0 300.5L227.0 301.6L226.5 301.6L226.5 303.0L226.0 303.0L226.0 303.4L225.5 303.4L225.5 303.1L225.0 303.1L225.0 304.7L224.5 304.7L224.5 302.1L224.0 302.1L224.0 307.0L223.5 307.0L223.5 306.3L223.0 306.3L223.0 302.0L222.5 302.0L222.5 303.8L222.0 303.8L222.0 307.3L221.5 307.3L221.5 307.5L221.0 307.5L221.0 311.8L220.5 311.8L220.5 313.0L220.0 313.0L220.0 316.1L219.5 316.1L219.5 313.8L219.0 313.8L219.0 319.4L218.5 319.4L218.5 336.7L218.0 336.7L218.0 332.3L217.5 332.3L217.5 337.0L217.0 337.0L217.0 335.0L216.5 335.0L216.5 327.1L216.0 327.1L216.0 307.8L215.5 307.8L215.5 300.3L215.0 300.3L215.0 299.8L214.5 299.8L214.5 301.9L214.0 301.9L214.0 301.8L213.5 301.8L213.5 299.5L213.0 299.5L213.0 299.8L212.5 299.8L212.5 301.6L212.0 301.6L212.0 304.7L211.5 304.7L211.5 306.3L211.0 306.3L211.0 303.3L210.5 303.3L210.5 301.7L210.0 301.7L210.0 301.1L209.5 301.1L209.5 301.3L209.0 301.3L209.0 300.7L208.5 300.7L208.5 301.2L208.0 301.2L208.0 301.6L207.5 301.6L207.5 305.7L207.0 305.7L207.0 307.1L206.5 307.1L206.5 315.5L206.0 315.5L206.0 310.1L205.5 310.1L205.5 315.5L205.0 315.5L205.0 309.7L204.5 309.7L204.5 304.3L204.0 304.3L204.0 303.7L203.5 303.7L203.5 302.0L203.0 302.0L203.0 301.5L202.5 301.5L202.5 300.6L202.0 300.6L202.0 299.4L201.5 299.4L201.5 300.2L201.0 300.2L201.0 300.3L200.5 300.3L200.5 305.3L200.0 305.3L200.0 306.2L199.5 306.2L199.5 305.7L199.0 305.7L199.0 309.6L198.5 309.6L198.5 313.3L198.0 313.3L198.0 310.2L197.5 310.2L197.5 312.3L197.0 312.3L197.0 315.3L196.5 315.3L196.5 317.9L196.0 317.9L196.0 319.7L195.5 319.7L195.5 320.9L195.0 320.9L195.0 317.9L194.5 317.9L194.5 327.3L194.0 327.3L194.0 337.0L193.5 337.0L193.5 327.9L193.0 327.9L193.0 332.3L192.5 332.3L192.5 317.6L192.0 317.6L192.0 309.7L191.5 309.7L191.5 303.4L191.0 303.4L191.0 301.3L190.5 301.3L190.5 306.9L190.0 306.9L190.0 305.3L189.5 305.3L189.5 302.8L189.0 302.8L189.0 300.7L188.5 300.7L188.5 300.7L188.0 300.7L188.0 304.8L187.5 304.8L187.5 305.9L187.0 305.9L187.0 302.9L186.5 302.9L186.5 301.2L186.0 301.2L186.0 301.5L185.5 301.5L185.5 302.2L185.0 302.2L185.0 301.1L184.5 301.1L184.5 301.1L184.0 301.1L184.0 302.4L183.5 302.4L183.5 303.0L183.0 303.0L183.0 312.6L182.5 312.6L182.5 315.3L182.0 315.3L182.0 310.1L181.5 310.1L181.5 311.5L181.0 311.5L181.0 298.7L180.5 298.7L180.5 300.0L180.0 300.0L180.0 299.0L179.5 299.0L179.5 299.8L179.0 299.8L179.0 300.6L178.5 300.6L178.5 300.8L178.0 300.8Z" fill="#0b5cb8"/>
<path d="M299.0 291.4L299.5 291.4L299.5 290.9L300.0 290.9L300.0 290.5L300.5 290.5L300.5 290.0L301.0 290.0L301.0 289.6L301.5 289.6L301.5 289.3L302.0 289.3L302.0 289.1L302.5 289.1L302.5 288.2L303.0 288.2L303.0 288.1L303.5 288.1L303.5 287.3L304.0 287.3L304.0 286.8L304.5 286.8L304.5 286.5L305.0 286.5L305.0 289.2L305.5 289.2L305.5 288.6L306.0 288.6L306.0 287.7L306.5 287.7L306.5 287.4L307.0 287.4L307.0 287.4L307.5 287.4L307.5 287.4L308.0 287.4L308.0 287.2L308.5 287.2L308.5 287.7L309.0 287.7L309.0 287.9L309.5 287.9L309.5 288.3L310.0 288.3L310.0 289.1L310.5 289.1L310.5 288.6L311.0 288.6L311.0 288.0L311.5 288.0L311.5 288.0L312.0 288.0L312.0 287.5L312.5 287.5L312.5 287.3L313.0 287.3L313.0 287.0L313.5 287.0L313.5 287.0L314.0 287.0L314.0 287.9L314.5 287.9L314.5 288.6L315.0 288.6L315.0 289.2L315.5 289.2L315.5 289.1L316.0 289.1L316.0 288.4L316.5 288.4L316.5 287.8L317.0 287.8L317.0 287.5L317.5 287.5L317.5 287.1L318.0 287.1L318.0 286.8L318.5 286.8L318.5 286.9L319.0 286.9L319.0 288.2L319.5 288.2L319.5 288.5L320.0 288.5L320.0 288.9L320.5 288.9L320.5 289.0L321.0 289.0L321.0 288.1L321.5 288.1L321.5 287.3L322.0 287.3L322.0 287.2L322.5 287.2L322.5 286.9L323.0 286.9L323.0 287.3L323.5 287.3L323.5 287.2L324.0 287.2L324.0 287.8L324.5 287.8L324.5 288.4L325.0 288.4L325.0 289.0L325.5 289.0L325.5 289.0L326.0 289.0L326.0 283.2L326.5 283.2L326.5 283.0L327.0 283.0L327.0 283.7L327.5 283.7L327.5 282.3L328.0 282.3L328.0 283.2L328.5 283.2L328.5 282.3L329.0 282.3L329.0 282.1L329.5 282.1L329.5 281.7L330.0 281.7L330.0 280.5L330.5 280.5L330.5 278.9L331.0 278.9L331.0 280.9L331.5 280.9L331.5 284.0L332.0 284.0L332.0 284.0L332.5 284.0L332.5 284.6L333.0 284.6L333.0 283.1L333.5 283.1L333.5 282.2L334.0 282.2L334.0 281.6L334.5 281.6L334.5 279.7L335.0 279.7L335.0 275.8L335.5 275.8L335.5 265.9L336.0 265.9L336.0 262.1L336.5 262.1L336.5 262.3L337.0 262.3L337.0 264.1L337.5 264.1L337.5 262.1L338.0 262.1L338.0 270.9L338.5 270.9L338.5 273.3L339.0 273.3L339.0 273.1L339.5 273.1L339.5 275.3L340.0 275.3L340.0 277.5L340.5 277.5L340.5 278.7L341.0 278.7L341.0 278.6L341.5 278.6L341.5 279.6L342.0 279.6L342.0 280.6L342.5 280.6L342.5 279.3L343.0 279.3L343.0 279.6L343.5 279.6L343.5 278.0L344.0 278.0L344.0 281.8L344.5 281.8L344.5 282.0L345.0 282.0L345.0 282.5L345.5 282.5L345.5 282.6L346.0 282.6L346.0 282.9L346.5 282.9L346.5 282.0L347.0 282.0L347.0 278.6L347.5 278.6L347.5 273.2L348.0 273.2L348.0 270.9L348.5 270.9L348.5 273.4L349.0 273.4L349.0 276.0L349.5 276.0L349.5 277.4L350.0 277.4L350.0 279.4L350.5 279.4L350.5 279.5L351.0 279.5L351.0 281.0L351.5 281.0L351.5 283.2L352.0 283.2L352.0 282.3L352.5 282.3L352.5 284.1L353.0 284.1L353.0 283.7L353.5 283.7L353.5 283.3L354.0 283.3L354.0 277.6L354.5 277.6L354.5 278.2L355.0 278.2L355.0 279.4L355.5 279.4L355.5 282.7L356.0 282.7L356.0 283.2L356.5 283.2L356.5 282.6L357.0 282.6L357.0 280.5L357.5 280.5L357.5 279.0L358.0 279.0L358.0 274.5L358.5 274.5L358.5 271.2L359.0 271.2L359.0 264.9L359.5 264.9L359.5 255.3L360.0 255.3L360.0 253.8L360.5 253.8L360.5 252.5L361.0 252.5L361.0 253.1L361.5 253.1L361.5 252.9L362.0 252.9L362.0 257.8L362.5 257.8L362.5 258.7L363.0 258.7L363.0 262.7L363.5 262.7L363.5 262.8L364.0 262.8L364.0 266.3L364.5 266.3L364.5 266.3L365.0 266.3L365.0 269.5L365.5 269.5L365.5 271.7L366.0 271.7L366.0 272.8L366.5 272.8L366.5 275.1L367.0 275.1L367.0 276.3L367.5 276.3L367.5 275.8L368.0 275.8L368.0 279.3L368.5 279.3L368.5 279.5L369.0 279.5L369.0 282.2L369.5 282.2L369.5 283.3L370.0 283.3L370.0 283.7L370.5 283.7L370.5 282.4L371.0 282.4L371.0 282.6L371.5 282.6L371.5 282.3L372.0 282.3L372.0 281.8L372.5 281.8L372.5 272.4L373.0 272.4L373.0 274.3L373.5 274.3L373.5 272.1L374.0 272.1L374.0 273.3L374.5 273.3L374.5 277.2L375.0 277.2L375.0 279.8L375.5 279.8L375.5 279.4L376.0 279.4L376.0 281.5L376.5 281.5L376.5 283.2L377.0 283.2L377.0 282.1L377.5 282.1L377.5 282.9L378.0 282.9L378.0 280.9L378.5 280.9L378.5 280.2L379.0 280.2L379.0 281.4L379.5 281.4L379.5 282.4L380.0 282.4L380.0 282.0L380.5 282.0L380.5 283.1L381.0 283.1L381.0 280.0L381.5 280.0L381.5 280.2L382.0 280.2L382.0 278.3L382.5 278.3L382.5 272.6L383.0 272.6L383.0 272.3L383.5 272.3L383.5 250.9L384.0 250.9L384.0 252.6L384.5 252.6L384.5 249.2L385.0 249.2L385.0 249.9L385.5 249.9L385.5 250.4L386.0 250.4L386.0 263.3L386.5 263.3L386.5 265.5L387.0 265.5L387.0 268.5L387.5 268.5L387.5 271.8L388.0 271.8L388.0 272.8L388.5 272.8L388.5 275.2L389.0 275.2L389.0 275.6L389.5 275.6L389.5 277.6L390.0 277.6L390.0 279.9L390.5 279.9L390.5 279.5L391.0 279.5L391.0 278.6L391.5 278.6L391.5 282.6L392.0 282.6L392.0 280.8L392.5 280.8L392.5 280.9L393.0 280.9L393.0 282.1L393.5 282.1L393.5 280.8L394.0 280.8L394.0 281.7L394.5 281.7L394.5 282.8L395.0 282.8L395.0 281.5L395.5 281.5L395.5 272.9L396.0 272.9L396.0 273.4L396.5 273.4L396.5 271.7L397.0 271.7L397.0 270.9L397.5 270.9L397.5 275.6L398.0 275.6L398.0 276.9L398.5 276.9L398.5 280.2L399.0 280.2L399.0 280.5L399.5 280.5L399.5 282.9L400.0 282.9L400.0 282.0L400.5 282.0L400.5 283.6L401.0 283.6L401.0 283.9L401.5 283.9L401.5 284.0L402.0 284.0L402.0 278.1L402.5 278.1L402.5 279.1L403.0 279.1L403.0 284.3L403.5 284.3L403.5 284.7L404.0 284.7L404.0 284.3L404.5 284.3L404.5 281.8L405.0 281.8L405.0 280.6L405.5 280.6L405.5 281.3L406.0 281.3L406.0 280.3L406.5 280.3L406.5 277.0L407.0 277.0L407.0 275.2L407.5 275.2L407.5 252.4L408.0 252.4L408.0 250.2L408.5 250.2L408.5 255.0L409.0 255.0L409.0 249.6L409.5 249.6L409.5 253.6L410.0 253.6L410.0 271.7L410.5 271.7L410.5 270.2L411.0 270.2L411.0 273.0L411.5 273.0L411.5 276.4L412.0 276.4L412.0 276.9L412.5 276.9L412.5 280.0L413.0 280.0L413.0 280.6L413.5 280.6L413.5 282.2L414.0 282.2L414.0 282.3L414.5 282.3L414.5 278.8L415.0 278.8L415.0 278.8L415.5 278.8L415.5 283.6L416.0 283.6L416.0 284.2L416.5 284.2L416.5 284.2L417.0 284.2L417.0 284.5L417.5 284.5L417.5 285.4L418.0 285.4L418.0 284.9L418.5 284.9L418.5 284.5L419.0 284.5L419.0 283.0L419.5 283.0L419.5 282.9L420.0 282.9L420.0 281.6L420.5 281.6L420.5 274.0L421.0 274.0L421.0 275.0L421.5 275.0L421.5 275.0L422.0 275.0L422.0 278.7L422.5 278.7L422.5 279.0L423.0 279.0L423.0 281.6L423.5 281.6L423.5 282.9L424.0 282.9L424.0 283.4L424.5 283.4L424.5 283.4L425.0 283.4L425.0 283.0L425.5 283.0L425.5 282.3L426.0 282.3L426.0 281.1L426.5 281.1L426.5 280.5L427.0 280.5L427.0 281.3L427.5 281.3L427.5 280.9L428.0 280.9L428.0 280.7L428.5 280.7L428.5 280.2L429.0 280.2L429.0 279.4L429.5 279.4L429.5 280.3L430.0 280.3L430.0 277.3L430.5 277.3L430.5 274.5L431.0 274.5L431.0 271.9L431.5 271.9L431.5 255.0L432.0 255.0L432.0 252.1L432.5 252.1L432.5 252.1L433.0 252.1L433.0 251.9L433.5 251.9L433.5 253.0L434.0 253.0L434.0 269.8L434.5 269.8L434.5 269.8L435.0 269.8L435.0 273.1L435.5 273.1L435.5 273.0L436.0 273.0L436.0 275.4L436.5 275.4L436.5 277.2L437.0 277.2L437.0 277.0L437.5 277.0L437.5 279.4L438.0 279.4L438.0 281.6L438.5 281.6L438.5 280.8L439.0 280.8L439.0 280.1L439.5 280.1L439.5 283.8L440.0 283.8L440.0 283.2L440.5 283.2L440.5 281.0L441.0 281.0L441.0 281.9L441.5 281.9L441.5 281.5L442.0 281.5L442.0 280.3L442.5 280.3L442.5 281.6L443.0 281.6L443.0 281.7L443.5 281.7L443.5 280.5L444.0 280.5L444.0 273.2L444.5 273.2L444.5 270.9L445.0 270.9L445.0 272.6L445.5 272.6L445.5 276.1L446.0 276.1L446.0 275.9L446.5 275.9L446.5 277.7L447.0 277.7L447.0 280.1L447.5 280.1L447.5 280.8L448.0 280.8L448.0 282.7L448.5 282.7L448.5 282.7L449.0 282.7L449.0 283.2L449.5 283.2L449.5 282.4L450.0 282.4L450.0 279.0L450.5 279.0L450.5 279.4L451.0 279.4L451.0 284.2L451.5 284.2L451.5 284.9L452.0 284.9L452.0 285.4L452.5 285.4L452.5 281.9L453.0 281.9L453.0 280.7L453.5 280.7L453.5 275.7L454.0 275.7L454.0 272.9L454.5 272.9L454.5 267.1L455.0 267.1L455.0 266.3L455.5 266.3L455.5 250.7L456.0 250.7L456.0 255.3L456.5 255.3L456.5 256.6L457.0 256.6L457.0 254.1L457.5 254.1L457.5 253.5L458.0 253.5L458.0 260.2L458.5 260.2L458.5 263.7L459.0 263.7L459.0 266.1L459.5 266.1L459.5 264.4L460.0 264.4L460.0 268.2L460.5 268.2L460.5 270.1L461.0 270.1L461.0 268.5L461.5 268.5L461.5 272.2L462.0 272.2L462.0 274.0L462.5 274.0L462.5 275.2L463.0 275.2L463.0 276.7L463.5 276.7L463.5 278.8L464.0 278.8L464.0 279.4L464.5 279.4L464.5 281.6L465.0 281.6L465.0 282.9L465.5 282.9L465.5 283.8L466.0 283.8L466.0 284.2L466.5 284.2L466.5 281.3L467.0 281.3L467.0 274.7L467.5 274.7L467.5 273.6L468.0 273.6L468.0 275.4L468.5 275.4L468.5 275.4L469.0 275.4L469.0 278.2L469.5 278.2L469.5 279.4L470.0 279.4L470.0 280.8L470.5 280.8L470.5 282.9L471.0 282.9L471.0 284.0L471.5 284.0L471.5 283.7L472.0 283.7L472.0 284.4L472.5 284.4L472.5 284.8L473.0 284.8L473.0 284.0L473.5 284.0L473.5 277.6L474.0 277.6L474.0 279.2L474.5 279.2L474.5 279.5L475.0 279.5L475.0 281.9L475.5 281.9L475.5 282.0L476.0 282.0L476.0 282.0L476.5 282.0L476.5 281.5L477.0 281.5L477.0 281.6L477.5 281.6L477.5 279.2L478.0 279.2L478.0 278.3L478.5 278.3L478.5 274.7L479.0 274.7L479.0 269.7L479.5 269.7L479.5 252.6L480.0 252.6L480.0 249.0L480.5 249.0L480.5 252.8L481.0 252.8L481.0 255.8L481.5 255.8L481.5 249.7L482.0 249.7L482.0 269.8L482.5 269.8L482.5 271.4L483.0 271.4L483.0 274.5L483.5 274.5L483.5 273.8L484.0 273.8L484.0 277.1L484.5 277.1L484.5 277.9L485.0 277.9L485.0 279.9L485.5 279.9L485.5 281.8L486.0 281.8L486.0 280.0L486.5 280.0L486.5 282.0L487.0 282.0L487.0 280.7L487.5 280.7L487.5 284.9L488.0 284.9L488.0 283.6L488.5 283.6L488.5 282.9L489.0 282.9L489.0 283.1L489.5 283.1L489.5 282.5L490.0 282.5L490.0 282.4L490.5 282.4L490.5 282.2L491.0 282.2L491.0 282.3L491.5 282.3L491.5 281.4L492.0 281.4L492.0 277.6L492.5 277.6L492.5 268.5L493.0 268.5L493.0 269.1L493.5 269.1L493.5 271.0L494.0 271.0L494.0 273.6L494.5 273.6L494.5 276.6L495.0 276.6L495.0 278.5L495.5 278.5L495.5 279.5L496.0 279.5L496.0 280.5L496.5 280.5L496.5 282.0L497.0 282.0L497.0 280.7L497.5 280.7L497.5 280.1L498.0 280.1L498.0 279.8L498.5 279.8L498.5 281.0L499.0 281.0L499.0 283.8L499.5 283.8L499.5 284.0L500.0 284.0L500.0 284.3L500.5 284.3L500.5 279.7L501.0 279.7L501.0 280.5L501.5 280.5L501.5 276.8L502.0 276.8L502.0 274.4L502.5 274.4L502.5 270.2L503.0 270.2L503.0 251.0L503.5 251.0L503.5 250.9L504.0 250.9L504.0 255.0L504.5 255.0L504.5 254.1L505.0 254.1L505.0 253.2L505.5 253.2L505.5 261.3L506.0 261.3L506.0 266.0L506.5 266.0L506.5 268.0L507.0 268.0L507.0 270.4L507.5 270.4L507.5 269.7L508.0 269.7L508.0 269.9L508.5 269.9L508.5 272.8L509.0 272.8L509.0 276.0L509.5 276.0L509.5 276.3L510.0 276.3L510.0 277.5L510.5 277.5L510.5 279.1L511.0 279.1L511.0 279.6L511.5 279.6L511.5 282.2L512.0 282.2L512.0 282.2L512.5 282.2L512.5 282.9L513.0 282.9L513.0 283.5L513.5 283.5L513.5 284.6L514.0 284.6L514.0 285.2L514.5 285.2L514.5 285.4L515.0 285.4L515.0 283.8L515.5 283.8L515.5 279.3L516.0 279.3L516.0 279.7L516.5 279.7L516.5 280.9L517.0 280.9L517.0 283.6L517.5 283.6L517.5 284.6L518.0 284.6L518.0 284.9L518.5 284.9L518.5 286.2L519.0 286.2L519.0 287.0L519.5 287.0L519.5 286.5L520.0 286.5L520.0 287.5L520.5 287.5L520.5 288.0L521.0 288.0L521.0 287.9L521.5 287.9L521.5 286.3L522.0 286.3L522.0 285.9L522.5 285.9L522.5 286.5L523.0 286.5L523.0 288.4L523.5 288.4L523.5 288.5L524.0 288.5L524.0 288.0L524.5 288.0L524.5 288.0L525.0 288.0L525.0 288.2L525.5 288.2L525.5 287.6L526.0 287.6L526.0 286.7L526.5 286.7L526.5 287.3L527.0 287.3L527.0 285.8L527.5 285.8L527.5 287.2L528.0 287.2L528.0 287.4L528.5 287.4L528.5 287.9L529.0 287.9L529.0 288.4L529.5 288.4L529.5 289.1L530.0 289.1L530.0 289.3L530.5 289.3L530.5 289.9L531.0 289.9L531.0 290.1L531.5 290.1L531.5 289.9L532.0 289.9L532.0 289.8L532.5 289.8L532.5 290.2L533.0 290.2L533.0 290.0L533.5 290.0L533.5 290.1L534.0 290.1L534.0 289.9L534.5 289.9L534.5 295.1L534.0 295.1L534.0 294.8L533.5 294.8L533.5 295.0L533.0 295.0L533.0 294.9L532.5 294.9L532.5 295.4L532.0 295.4L532.0 295.2L531.5 295.2L531.5 295.0L531.0 295.0L531.0 295.3L530.5 295.3L530.5 295.6L530.0 295.6L530.0 296.2L529.5 296.2L529.5 296.7L529.0 296.7L529.0 297.3L528.5 297.3L528.5 297.3L528.0 297.3L528.0 297.8L527.5 297.8L527.5 298.7L527.0 298.7L527.0 297.3L526.5 297.3L526.5 297.8L526.0 297.8L526.0 297.2L525.5 297.2L525.5 296.8L525.0 296.8L525.0 296.6L524.5 296.6L524.5 296.8L524.0 296.8L524.0 296.8L523.5 296.8L523.5 296.5L523.0 296.5L523.0 298.6L522.5 298.6L522.5 299.5L522.0 299.5L522.0 298.9L521.5 298.9L521.5 297.6L521.0 297.6L521.0 297.0L520.5 297.0L520.5 297.7L520.0 297.7L520.0 298.6L519.5 298.6L519.5 297.8L519.0 297.8L519.0 298.4L518.5 298.4L518.5 300.1L518.0 300.1L518.0 300.3L517.5 300.3L517.5 301.2L517.0 301.2L517.0 303.8L516.5 303.8L516.5 303.9L516.0 303.9L516.0 305.9L515.5 305.9L515.5 301.4L515.0 301.4L515.0 299.5L514.5 299.5L514.5 299.1L514.0 299.1L514.0 300.7L513.5 300.7L513.5 301.5L513.0 301.5L513.0 301.3L512.5 301.3L512.5 302.8L512.0 302.8L512.0 302.5L511.5 302.5L511.5 305.1L511.0 305.1L511.0 304.6L510.5 304.6L510.5 306.6L510.0 306.6L510.0 310.4L509.5 310.4L509.5 309.8L509.0 309.8L509.0 314.1L508.5 314.1L508.5 314.1L508.0 314.1L508.0 316.9L507.5 316.9L507.5 315.4L507.0 315.4L507.0 314.2L506.5 314.2L506.5 318.0L506.0 318.0L506.0 321.8L505.5 321.8L505.5 330.7L505.0 330.7L505.0 333.0L504.5 333.0L504.5 327.1L504.0 327.1L504.0 335.7L503.5 335.7L503.5 331.7L503.0 331.7L503.0 312.8L502.5 312.8L502.5 310.3L502.0 310.3L502.0 306.5L501.5 306.5L501.5 303.4L501.0 303.4L501.0 304.5L500.5 304.5L500.5 299.9L500.0 299.9L500.0 301.6L499.5 301.6L499.5 302.1L499.0 302.1L499.0 303.6L498.5 303.6L498.5 303.8L498.0 303.8L498.0 305.5L497.5 305.5L497.5 304.0L497.0 304.0L497.0 302.1L496.5 302.1L496.5 303.9L496.0 303.9L496.0 306.8L495.5 306.8L495.5 305.7L495.0 305.7L495.0 306.5L494.5 306.5L494.5 310.8L494.0 310.8L494.0 311.8L493.5 311.8L493.5 314.4L493.0 314.4L493.0 317.4L492.5 317.4L492.5 307.2L492.0 307.2L492.0 303.5L491.5 303.5L491.5 302.0L491.0 302.0L491.0 302.9L490.5 302.9L490.5 302.2L490.0 302.2L490.0 303.2L489.5 303.2L489.5 302.7L489.0 302.7L489.0 302.0L488.5 302.0L488.5 301.5L488.0 301.5L488.0 300.5L487.5 300.5L487.5 303.1L487.0 303.1L487.0 302.8L486.5 302.8L486.5 305.3L486.0 305.3L486.0 302.8L485.5 302.8L485.5 306.4L485.0 306.4L485.0 306.2L484.5 306.2L484.5 306.9L484.0 306.9L484.0 312.3L483.5 312.3L483.5 312.8L483.0 312.8L483.0 311.4L482.5 311.4L482.5 314.0L482.0 314.0L482.0 331.9L481.5 331.9L481.5 326.7L481.0 326.7L481.0 334.5L480.5 334.5L480.5 332.6L480.0 332.6L480.0 334.9L479.5 334.9L479.5 313.0L479.0 313.0L479.0 309.0L478.5 309.0L478.5 306.4L478.0 306.4L478.0 306.7L477.5 306.7L477.5 304.0L477.0 304.0L477.0 302.8L476.5 302.8L476.5 303.9L476.0 303.9L476.0 303.2L475.5 303.2L475.5 303.2L475.0 303.2L475.0 304.9L474.5 304.9L474.5 305.1L474.0 305.1L474.0 306.5L473.5 306.5L473.5 301.1L473.0 301.1L473.0 301.0L472.5 301.0L472.5 301.3L472.0 301.3L472.0 301.1L471.5 301.1L471.5 301.0L471.0 301.0L471.0 301.3L470.5 301.3L470.5 305.2L470.0 305.2L470.0 306.3L469.5 306.3L469.5 305.2L469.0 305.2L469.0 309.9L468.5 309.9L468.5 309.6L468.0 309.6L468.0 312.7L467.5 312.7L467.5 311.5L467.0 311.5L467.0 303.0L466.5 303.0L466.5 300.1L466.0 300.1L466.0 300.6L465.5 300.6L465.5 302.1L465.0 302.1L465.0 304.3L464.5 304.3L464.5 305.6L464.0 305.6L464.0 306.7L463.5 306.7L463.5 308.9L463.0 308.9L463.0 308.4L462.5 308.4L462.5 312.9L462.0 312.9L462.0 314.1L461.5 314.1L461.5 314.1L461.0 314.1L461.0 317.1L460.5 317.1L460.5 317.1L460.0 317.1L460.0 319.0L459.5 319.0L459.5 317.4L459.0 317.4L459.0 323.5L458.5 323.5L458.5 323.2L458.0 323.2L458.0 327.3L457.5 327.3L457.5 331.1L457.0 331.1L457.0 332.9L456.5 332.9L456.5 331.0L456.0 331.0L456.0 335.8L455.5 335.8L455.5 317.4L455.0 317.4L455.0 318.4L454.5 318.4L454.5 312.8L454.0 312.8L454.0 310.4L453.5 310.4L453.5 303.5L453.0 303.5L453.0 302.3L452.5 302.3L452.5 299.3L452.0 299.3L452.0 299.3L451.5 299.3L451.5 301.6L451.0 301.6L451.0 304.5L450.5 304.5L450.5 307.1L450.0 307.1L450.0 302.2L449.5 302.2L449.5 300.9L449.0 300.9L449.0 303.2L448.5 303.2L448.5 302.6L448.0 302.6L448.0 305.5L447.5 305.5L447.5 303.9L447.0 303.9L447.0 306.8L446.5 306.8L446.5 308.0L446.0 308.0L446.0 310.6L445.5 310.6L445.5 311.0L445.0 311.0L445.0 316.4L444.5 316.4L444.5 311.8L444.0 311.8L444.0 305.7L443.5 305.7L443.5 302.1L443.0 302.1L443.0 303.0L442.5 303.0L442.5 305.5L442.0 305.5L442.0 302.3L441.5 302.3L441.5 302.6L441.0 302.6L441.0 302.7L440.5 302.7L440.5 301.9L440.0 301.9L440.0 301.8L439.5 301.8L439.5 306.1L439.0 306.1L439.0 304.9L438.5 304.9L438.5 304.2L438.0 304.2L438.0 306.7L437.5 306.7L437.5 309.6L437.0 309.6L437.0 306.1L436.5 306.1L436.5 309.2L436.0 309.2L436.0 310.8L435.5 310.8L435.5 312.9L435.0 312.9L435.0 314.7L434.5 314.7L434.5 314.9L434.0 314.9L434.0 327.9L433.5 327.9L433.5 331.2L433.0 331.2L433.0 333.8L432.5 333.8L432.5 336.6L432.0 336.6L432.0 325.9L431.5 325.9L431.5 315.1L431.0 315.1L431.0 310.7L430.5 310.7L430.5 309.2L430.0 309.2L430.0 304.5L429.5 304.5L429.5 306.7L429.0 306.7L429.0 306.3L428.5 306.3L428.5 304.9L428.0 304.9L428.0 304.7L427.5 304.7L427.5 303.5L427.0 303.5L427.0 304.7L426.5 304.7L426.5 302.9L426.0 302.9L426.0 301.6L425.5 301.6L425.5 301.6L425.0 301.6L425.0 301.1L424.5 301.1L424.5 300.9L424.0 300.9L424.0 301.8L423.5 301.8L423.5 303.3L423.0 303.3L423.0 304.5L422.5 304.5L422.5 306.6L422.0 306.6L422.0 311.0L421.5 311.0L421.5 309.2L421.0 309.2L421.0 312.8L420.5 312.8L420.5 302.5L420.0 302.5L420.0 301.1L419.5 301.1L419.5 301.3L419.0 301.3L419.0 300.6L418.5 300.6L418.5 300.8L418.0 300.8L418.0 300.1L417.5 300.1L417.5 300.6L417.0 300.6L417.0 301.7L416.5 301.7L416.5 300.3L416.0 300.3L416.0 301.5L415.5 301.5L415.5 307.7L415.0 307.7L415.0 307.9L414.5 307.9L414.5 302.6L414.0 302.6L414.0 303.9L413.5 303.9L413.5 305.0L413.0 305.0L413.0 304.2L412.5 304.2L412.5 307.0L412.0 307.0L412.0 310.4L411.5 310.4L411.5 313.5L411.0 313.5L411.0 314.9L410.5 314.9L410.5 314.5L410.0 314.5L410.0 331.4L409.5 331.4L409.5 335.9L409.0 335.9L409.0 332.6L408.5 332.6L408.5 335.9L408.0 335.9L408.0 335.3L407.5 335.3L407.5 309.2L407.0 309.2L407.0 308.6L406.5 308.6L406.5 304.1L406.0 304.1L406.0 304.0L405.5 304.0L405.5 305.1L405.0 305.1L405.0 303.7L404.5 303.7L404.5 299.8L404.0 299.8L404.0 300.0L403.5 300.0L403.5 301.3L403.0 301.3L403.0 306.4L402.5 306.4L402.5 306.7L402.0 306.7L402.0 300.1L401.5 300.1L401.5 300.3L401.0 300.3L401.0 300.8L400.5 300.8L400.5 303.2L400.0 303.2L400.0 301.8L399.5 301.8L399.5 305.1L399.0 305.1L399.0 303.5L398.5 303.5L398.5 306.6L398.0 306.6L398.0 308.7L397.5 308.7L397.5 314.4L397.0 314.4L397.0 312.5L396.5 312.5L396.5 310.2L396.0 310.2L396.0 312.9L395.5 312.9L395.5 303.1L395.0 303.1L395.0 302.3L394.5 302.3L394.5 302.8L394.0 302.8L394.0 303.4L393.5 303.4L393.5 304.3L393.0 304.3L393.0 304.0L392.5 304.0L392.5 303.5L392.0 303.5L392.0 302.1L391.5 302.1L391.5 306.9L391.0 306.9L391.0 307.0L390.5 307.0L390.5 304.8L390.0 304.8L390.0 308.1L389.5 308.1L389.5 310.3L389.0 310.3L389.0 308.9L388.5 308.9L388.5 311.3L388.0 311.3L388.0 315.0L387.5 315.0L387.5 316.6L387.0 316.6L387.0 317.7L386.5 317.7L386.5 319.1L386.0 319.1L386.0 333.8L385.5 333.8L385.5 333.2L385.0 333.2L385.0 336.6L384.5 336.6L384.5 332.1L384.0 332.1L384.0 330.2L383.5 330.2L383.5 311.5L383.0 311.5L383.0 313.8L382.5 313.8L382.5 307.9L382.0 307.9L382.0 305.6L381.5 305.6L381.5 305.1L381.0 305.1L381.0 303.0L380.5 303.0L380.5 303.0L380.0 303.0L380.0 302.0L379.5 302.0L379.5 302.6L379.0 302.6L379.0 305.1L378.5 305.1L378.5 304.9L378.0 304.9L378.0 302.0L377.5 302.0L377.5 302.3L377.0 302.3L377.0 302.9L376.5 302.9L376.5 303.6L376.0 303.6L376.0 305.3L375.5 305.3L375.5 306.7L375.0 306.7L375.0 306.7L374.5 306.7L374.5 313.7L374.0 313.7L374.0 312.2L373.5 312.2L373.5 312.4L373.0 312.4L373.0 312.5L372.5 312.5L372.5 303.3L372.0 303.3L372.0 303.4L371.5 303.4L371.5 301.8L371.0 301.8L371.0 301.9L370.5 301.9L370.5 301.8L370.0 301.8L370.0 301.0L369.5 301.0L369.5 301.8L369.0 301.8L369.0 306.8L368.5 306.8L368.5 305.6L368.0 305.6L368.0 307.9L367.5 307.9L367.5 309.3L367.0 309.3L367.0 309.1L366.5 309.1L366.5 314.5L366.0 314.5L366.0 312.9L365.5 312.9L365.5 313.6L365.0 313.6L365.0 321.6L364.5 321.6L364.5 316.5L364.0 316.5L364.0 321.6L363.5 321.6L363.5 323.8L363.0 323.8L363.0 327.3L362.5 327.3L362.5 330.2L362.0 330.2L362.0 334.8L361.5 334.8L361.5 333.4L361.0 333.4L361.0 331.7L360.5 331.7L360.5 333.0L360.0 333.0L360.0 330.0L359.5 330.0L359.5 321.2L359.0 321.2L359.0 313.0L358.5 313.0L358.5 311.7L358.0 311.7L358.0 306.9L357.5 306.9L357.5 303.7L357.0 303.7L357.0 303.1L356.5 303.1L356.5 302.1L356.0 302.1L356.0 303.2L355.5 303.2L355.5 304.2L355.0 304.2L355.0 307.8L354.5 307.8L354.5 306.0L354.0 306.0L354.0 302.0L353.5 302.0L353.5 301.5L353.0 301.5L353.0 300.9L352.5 300.9L352.5 302.2L352.0 302.2L352.0 302.4L351.5 302.4L351.5 304.2L351.0 304.2L351.0 305.7L350.5 305.7L350.5 305.9L350.0 305.9L350.0 307.2L349.5 307.2L349.5 308.5L349.0 308.5L349.0 310.9L348.5 310.9L348.5 316.0L348.0 316.0L348.0 311.4L347.5 311.4L347.5 305.8L347.0 305.8L347.0 302.9L346.5 302.9L346.5 303.0L346.0 303.0L346.0 302.6L345.5 302.6L345.5 301.5L345.0 301.5L345.0 303.6L344.5 303.6L344.5 302.2L344.0 302.2L344.0 307.6L343.5 307.6L343.5 304.7L343.0 304.7L343.0 306.2L342.5 306.2L342.5 303.2L342.0 303.2L342.0 304.8L341.5 304.8L341.5 306.4L341.0 306.4L341.0 304.8L340.5 304.8L340.5 309.0L340.0 309.0L340.0 309.1L339.5 309.1L339.5 313.8L339.0 313.8L339.0 311.9L338.5 311.9L338.5 316.6L338.0 316.6L338.0 322.0L337.5 322.0L337.5 319.2L337.0 319.2L337.0 320.7L336.5 320.7L336.5 323.8L336.0 323.8L336.0 316.5L335.5 316.5L335.5 310.5L335.0 310.5L335.0 304.8L334.5 304.8L334.5 303.3L334.0 303.3L334.0 303.1L333.5 303.1L333.5 302.4L333.0 302.4L333.0 299.6L332.5 299.6L332.5 300.2L332.0 300.2L332.0 300.9L331.5 300.9L331.5 302.7L331.0 302.7L331.0 307.2L330.5 307.2L330.5 306.0L330.0 306.0L330.0 302.5L329.5 302.5L329.5 303.2L329.0 303.2L329.0 302.9L328.5 302.9L328.5 301.2L328.0 301.2L328.0 303.0L327.5 303.0L327.5 302.2L327.0 302.2L327.0 301.4L326.5 301.4L326.5 302.7L326.0 302.7L326.0 296.1L325.5 296.1L325.5 295.9L325.0 295.9L325.0 296.4L324.5 296.4L324.5 297.4L324.0 297.4L324.0 297.3L323.5 297.3L323.5 297.1L323.0 297.1L323.0 298.0L322.5 298.0L322.5 297.4L322.0 297.4L322.0 298.1L321.5 298.1L321.5 296.8L321.0 296.8L321.0 296.4L320.5 296.4L320.5 295.9L320.0 295.9L320.0 296.5L319.5 296.5L319.5 297.3L319.0 297.3L319.0 298.7L318.5 298.7L318.5 297.6L318.0 297.6L318.0 298.4L317.5 298.4L317.5 297.8L317.0 297.8L317.0 296.6L316.5 296.6L316.5 296.1L316.0 296.1L316.0 296.1L315.5 296.1L315.5 295.9L315.0 295.9L315.0 296.2L314.5 296.2L314.5 297.3L314.0 297.3L314.0 297.9L313.5 297.9L313.5 297.5L313.0 297.5L313.0 297.7L312.5 297.7L312.5 297.5L312.0 297.5L312.0 297.6L311.5 297.6L311.5 297.2L311.0 297.2L311.0 296.0L310.5 296.0L310.5 296.0L310.0 296.0L310.0 296.8L309.5 296.8L309.5 297.1L309.0 297.1L309.0 297.8L308.5 297.8L308.5 297.3L308.0 297.3L308.0 297.2L307.5 297.2L307.5 297.5L307.0 297.5L307.0 297.9L306.5 297.9L306.5 296.8L306.0 296.8L306.0 296.7L305.5 296.7L305.5 295.9L305.0 295.9L305.0 298.3L304.5 298.3L304.5 298.3L304.0 298.3L304.0 297.5L303.5 297.5L303.5 297.4L303.0 297.4L303.0 296.9L302.5 296.9L302.5 295.7L302.0 295.7L302.0 295.6L301.5 295.6L301.5 295.1L301.0 295.1L301.0 294.9L300.5 294.9L300.5 294.6L300.0 294.6L300.0 294.2L299.5 294.2L299.5 293.5L299.0 293.5Z" fill="#0b5cb8"/>
<path d="M537.0 290.2L537.6 290.2L537.6 290.0L538.2 290.0L538.2 289.8L538.8 289.8L538.8 290.0L539.4 290.0L539.4 289.9L540.0 289.9L540.0 289.8L540.6 289.8L540.6 288.3L541.2 288.3L541.2 288.2L541.8 288.2L541.8 286.2L542.4 286.2L542.4 287.5L543.0 287.5L543.0 287.6L543.6 287.6L543.6 288.7L544.2 288.7L544.2 289.3L544.8 289.3L544.8 289.4L545.4 289.4L545.4 288.8L546.0 288.8L546.0 288.9L546.6 288.9L546.6 288.6L547.2 288.6L547.2 288.3L547.8 288.3L547.8 289.0L548.4 289.0L548.4 288.3L549.0 288.3L549.0 288.9L549.6 288.9L549.6 288.4L550.2 288.4L550.2 288.0L550.8 288.0L550.8 288.3L551.4 288.3L551.4 288.4L552.0 288.4L552.0 288.0L552.6 288.0L552.6 287.3L553.2 287.3L553.2 280.2L553.8 280.2L553.8 280.1L554.4 280.1L554.4 278.2L555.0 278.2L555.0 281.1L555.6 281.1L555.6 281.1L556.2 281.1L556.2 282.3L556.8 282.3L556.8 281.8L557.4 281.8L557.4 283.9L558.0 283.9L558.0 283.7L558.6 283.7L558.6 283.1L559.2 283.1L559.2 284.0L559.8 284.0L559.8 284.0L560.4 284.0L560.4 285.6L561.0 285.6L561.0 284.2L561.6 284.2L561.6 285.4L562.2 285.4L562.2 285.8L562.8 285.8L562.8 285.4L563.4 285.4L563.4 285.3L564.0 285.3L564.0 286.1L564.6 286.1L564.6 285.8L565.2 285.8L565.2 286.4L565.8 286.4L565.8 284.8L566.4 284.8L566.4 286.4L567.0 286.4L567.0 285.6L567.6 285.6L567.6 286.2L568.2 286.2L568.2 285.6L568.8 285.6L568.8 285.0L569.4 285.0L569.4 286.5L570.0 286.5L570.0 285.3L570.6 285.3L570.6 286.0L571.2 286.0L571.2 284.9L571.8 284.9L571.8 285.7L572.4 285.7L572.4 285.2L573.0 285.2L573.0 286.6L573.6 286.6L573.6 286.4L574.2 286.4L574.2 285.9L574.8 285.9L574.8 286.0L575.4 286.0L575.4 286.6L576.0 286.6L576.0 284.8L576.6 284.8L576.6 285.6L577.2 285.6L577.2 285.1L577.8 285.1L577.8 285.9L578.4 285.9L578.4 285.1L579.0 285.1L579.0 284.8L579.6 284.8L579.6 284.9L580.2 284.9L580.2 285.4L580.8 285.4L580.8 285.0L581.4 285.0L581.4 285.6L582.0 285.6L582.0 286.0L582.6 286.0L582.6 285.5L583.2 285.5L583.2 286.0L583.8 286.0L583.8 286.1L584.4 286.1L584.4 285.0L585.0 285.0L585.0 286.6L585.6 286.6L585.6 285.4L586.2 285.4L586.2 285.4L586.8 285.4L586.8 285.5L587.4 285.5L587.4 286.6L588.0 286.6L588.0 286.1L588.6 286.1L588.6 286.8L589.2 286.8L589.2 286.0L589.8 286.0L589.8 285.8L590.4 285.8L590.4 286.4L591.0 286.4L591.0 286.2L591.6 286.2L591.6 286.6L592.2 286.6L592.2 286.0L592.8 286.0L592.8 286.4L593.4 286.4L593.4 285.5L594.0 285.5L594.0 286.3L594.6 286.3L594.6 285.1L595.2 285.1L595.2 286.5L595.8 286.5L595.8 285.0L596.4 285.0L596.4 285.7L597.0 285.7L597.0 285.7L597.6 285.7L597.6 285.8L598.2 285.8L598.2 285.3L598.8 285.3L598.8 286.0L599.4 286.0L599.4 286.7L600.0 286.7L600.0 285.7L600.6 285.7L600.6 285.7L601.2 285.7L601.2 286.2L601.8 286.2L601.8 285.8L602.4 285.8L602.4 285.9L603.0 285.9L603.0 285.7L603.6 285.7L603.6 285.7L604.2 285.7L604.2 285.1L604.8 285.1L604.8 285.9L605.4 285.9L605.4 285.4L606.0 285.4L606.0 285.4L606.6 285.4L606.6 286.0L607.2 286.0L607.2 286.5L607.8 286.5L607.8 285.8L608.4 285.8L608.4 285.2L609.0 285.2L609.0 285.0L609.6 285.0L609.6 285.2L610.2 285.2L610.2 284.8L610.8 284.8L610.8 285.0L611.4 285.0L611.4 286.2L612.0 286.2L612.0 285.8L612.6 285.8L612.6 285.0L613.2 285.0L613.2 286.1L613.8 286.1L613.8 286.5L614.4 286.5L614.4 285.1L615.0 285.1L615.0 286.1L615.6 286.1L615.6 284.9L616.2 284.9L616.2 285.5L616.8 285.5L616.8 285.0L617.4 285.0L617.4 285.8L618.0 285.8L618.0 286.5L618.6 286.5L618.6 284.8L619.2 284.8L619.2 286.3L619.8 286.3L619.8 285.7L620.4 285.7L620.4 285.3L621.0 285.3L621.0 286.4L621.6 286.4L621.6 286.1L622.2 286.1L622.2 284.8L622.8 284.8L622.8 286.1L623.4 286.1L623.4 285.7L624.0 285.7L624.0 285.9L624.6 285.9L624.6 285.3L625.2 285.3L625.2 285.4L625.8 285.4L625.8 286.2L626.4 286.2L626.4 285.2L627.0 285.2L627.0 286.3L627.6 286.3L627.6 284.8L628.2 284.8L628.2 285.9L628.8 285.9L628.8 284.7L629.4 284.7L629.4 285.2L630.0 285.2L630.0 286.0L630.6 286.0L630.6 286.4L631.2 286.4L631.2 285.8L631.8 285.8L631.8 285.9L632.4 285.9L632.4 285.7L633.0 285.7L633.0 286.0L633.6 286.0L633.6 286.2L634.2 286.2L634.2 286.2L634.8 286.2L634.8 286.2L635.4 286.2L635.4 285.4L636.0 285.4L636.0 285.0L636.6 285.0L636.6 285.3L637.2 285.3L637.2 285.9L637.8 285.9L637.8 286.0L638.4 286.0L638.4 285.9L639.0 285.9L639.0 286.2L639.6 286.2L639.6 285.5L640.2 285.5L640.2 286.0L640.8 286.0L640.8 285.1L641.4 285.1L641.4 286.0L642.0 286.0L642.0 285.3L642.6 285.3L642.6 285.7L643.2 285.7L643.2 286.6L643.8 286.6L643.8 286.7L644.4 286.7L644.4 286.2L645.0 286.2L645.0 285.6L645.6 285.6L645.6 285.2L646.2 285.2L646.2 286.8L646.8 286.8L646.8 286.0L647.4 286.0L647.4 286.0L648.0 286.0L648.0 285.7L648.6 285.7L648.6 283.7L649.2 283.7L649.2 277.9L649.8 277.9L649.8 278.9L650.4 278.9L650.4 279.8L651.0 279.8L651.0 282.2L651.6 282.2L651.6 281.5L652.2 281.5L652.2 282.6L652.8 282.6L652.8 283.1L653.4 283.1L653.4 283.9L654.0 283.9L654.0 282.9L654.6 282.9L654.6 284.9L655.2 284.9L655.2 284.4L655.8 284.4L655.8 285.8L656.4 285.8L656.4 285.0L657.0 285.0L657.0 286.2L657.6 286.2L657.6 286.4L658.2 286.4L658.2 284.6L658.8 284.6L658.8 286.4L659.4 286.4L659.4 285.4L660.0 285.4L660.0 286.3L660.6 286.3L660.6 285.9L661.2 285.9L661.2 283.7L661.8 283.7L661.8 280.3L662.4 280.3L662.4 279.5L663.0 279.5L663.0 279.4L663.6 279.4L663.6 281.3L664.2 281.3L664.2 282.6L664.8 282.6L664.8 282.1L665.4 282.1L665.4 282.0L666.0 282.0L666.0 282.6L666.6 282.6L666.6 283.0L667.2 283.0L667.2 284.9L667.8 284.9L667.8 284.6L668.4 284.6L668.4 285.7L669.0 285.7L669.0 286.2L669.6 286.2L669.6 285.0L670.2 285.0L670.2 286.2L670.8 286.2L670.8 286.4L671.4 286.4L671.4 285.9L672.0 285.9L672.0 285.2L672.6 285.2L672.6 286.4L673.2 286.4L673.2 284.2L673.8 284.2L673.8 281.2L674.4 281.2L674.4 281.2L675.0 281.2L675.0 280.8L675.6 280.8L675.6 280.7L676.2 280.7L676.2 282.7L676.8 282.7L676.8 283.5L677.4 283.5L677.4 283.1L678.0 283.1L678.0 284.6L678.6 284.6L678.6 284.8L679.2 284.8L679.2 285.4L679.8 285.4L679.8 286.7L680.4 286.7L680.4 286.8L681.0 286.8L681.0 285.9L681.6 285.9L681.6 286.5L682.2 286.5L682.2 286.2L682.8 286.2L682.8 286.0L683.4 286.0L683.4 285.5L684.0 285.5L684.0 286.9L684.6 286.9L684.6 285.2L685.2 285.2L685.2 283.6L685.8 283.6L685.8 281.2L686.4 281.2L686.4 281.6L687.0 281.6L687.0 281.4L687.6 281.4L687.6 282.7L688.2 282.7L688.2 282.7L688.8 282.7L688.8 284.5L689.4 284.5L689.4 284.5L690.0 284.5L690.0 283.8L690.6 283.8L690.6 284.4L691.2 284.4L691.2 286.1L691.8 286.1L691.8 287.0L692.4 287.0L692.4 285.9L693.0 285.9L693.0 286.8L693.6 286.8L693.6 286.0L694.2 286.0L694.2 287.2L694.8 287.2L694.8 287.3L695.4 287.3L695.4 286.4L696.0 286.4L696.0 286.3L696.6 286.3L696.6 285.8L697.2 285.8L697.2 286.4L697.8 286.4L697.8 282.3L698.4 282.3L698.4 280.3L699.0 280.3L699.0 280.2L699.6 280.2L699.6 281.3L700.2 281.3L700.2 282.0L700.8 282.0L700.8 283.4L701.4 283.4L701.4 284.8L702.0 284.8L702.0 299.7L701.4 299.7L701.4 301.4L700.8 301.4L700.8 302.6L700.2 302.6L700.2 303.5L699.6 303.5L699.6 303.4L699.0 303.4L699.0 306.4L698.4 306.4L698.4 302.5L697.8 302.5L697.8 297.7L697.2 297.7L697.2 299.7L696.6 299.7L696.6 297.9L696.0 297.9L696.0 299.4L695.4 299.4L695.4 298.0L694.8 298.0L694.8 298.2L694.2 298.2L694.2 299.2L693.6 299.2L693.6 298.8L693.0 298.8L693.0 298.7L692.4 298.7L692.4 298.9L691.8 298.9L691.8 299.3L691.2 299.3L691.2 300.4L690.6 300.4L690.6 301.0L690.0 301.0L690.0 299.9L689.4 299.9L689.4 299.4L688.8 299.4L688.8 303.1L688.2 303.1L688.2 302.3L687.6 302.3L687.6 303.9L687.0 303.9L687.0 302.7L686.4 302.7L686.4 304.2L685.8 304.2L685.8 302.6L685.2 302.6L685.2 298.9L684.6 298.9L684.6 297.9L684.0 297.9L684.0 299.4L683.4 299.4L683.4 298.4L682.8 298.4L682.8 298.4L682.2 298.4L682.2 297.7L681.6 297.7L681.6 298.9L681.0 298.9L681.0 298.3L680.4 298.3L680.4 299.0L679.8 299.0L679.8 299.5L679.2 299.5L679.2 299.8L678.6 299.8L678.6 300.3L678.0 300.3L678.0 301.2L677.4 301.2L677.4 301.0L676.8 301.0L676.8 303.5L676.2 303.5L676.2 304.5L675.6 304.5L675.6 305.5L675.0 305.5L675.0 303.8L674.4 303.8L674.4 305.4L673.8 305.4L673.8 300.1L673.2 300.1L673.2 298.4L672.6 298.4L672.6 300.5L672.0 300.5L672.0 300.1L671.4 300.1L671.4 297.8L670.8 297.8L670.8 298.9L670.2 298.9L670.2 300.4L669.6 300.4L669.6 299.5L669.0 299.5L669.0 298.3L668.4 298.3L668.4 301.4L667.8 301.4L667.8 300.4L667.2 300.4L667.2 302.1L666.6 302.1L666.6 301.5L666.0 301.5L666.0 301.9L665.4 301.9L665.4 302.7L664.8 302.7L664.8 302.3L664.2 302.3L664.2 302.2L663.6 302.2L663.6 304.7L663.0 304.7L663.0 304.7L662.4 304.7L662.4 303.0L661.8 303.0L661.8 301.5L661.2 301.5L661.2 299.1L660.6 299.1L660.6 299.3L660.0 299.3L660.0 299.6L659.4 299.6L659.4 298.3L658.8 298.3L658.8 301.2L658.2 301.2L658.2 299.3L657.6 299.3L657.6 298.7L657.0 298.7L657.0 300.5L656.4 300.5L656.4 299.9L655.8 299.9L655.8 301.1L655.2 301.1L655.2 300.5L654.6 300.5L654.6 301.0L654.0 301.0L654.0 300.8L653.4 300.8L653.4 301.5L652.8 301.5L652.8 304.0L652.2 304.0L652.2 304.0L651.6 304.0L651.6 302.6L651.0 302.6L651.0 307.0L650.4 307.0L650.4 306.7L649.8 306.7L649.8 306.7L649.2 306.7L649.2 302.4L648.6 302.4L648.6 299.5L648.0 299.5L648.0 298.6L647.4 298.6L647.4 298.7L646.8 298.7L646.8 298.4L646.2 298.4L646.2 300.7L645.6 300.7L645.6 299.1L645.0 299.1L645.0 299.3L644.4 299.3L644.4 298.1L643.8 298.1L643.8 299.1L643.2 299.1L643.2 299.4L642.6 299.4L642.6 300.4L642.0 300.4L642.0 298.7L641.4 298.7L641.4 299.4L640.8 299.4L640.8 298.2L640.2 298.2L640.2 299.0L639.6 299.0L639.6 299.2L639.0 299.2L639.0 300.0L638.4 300.0L638.4 298.6L637.8 298.6L637.8 298.2L637.2 298.2L637.2 299.9L636.6 299.9L636.6 299.8L636.0 299.8L636.0 299.5L635.4 299.5L635.4 299.6L634.8 299.6L634.8 299.6L634.2 299.6L634.2 298.9L633.6 298.9L633.6 299.4L633.0 299.4L633.0 300.2L632.4 300.2L632.4 299.0L631.8 299.0L631.8 299.8L631.2 299.8L631.2 298.9L630.6 298.9L630.6 298.8L630.0 298.8L630.0 299.5L629.4 299.5L629.4 300.7L628.8 300.7L628.8 298.5L628.2 298.5L628.2 300.4L627.6 300.4L627.6 297.9L627.0 297.9L627.0 299.7L626.4 299.7L626.4 298.0L625.8 298.0L625.8 300.0L625.2 300.0L625.2 299.2L624.6 299.2L624.6 298.7L624.0 298.7L624.0 298.3L623.4 298.3L623.4 299.2L622.8 299.2L622.8 300.7L622.2 300.7L622.2 299.2L621.6 299.2L621.6 299.7L621.0 299.7L621.0 300.6L620.4 300.6L620.4 300.0L619.8 300.0L619.8 298.1L619.2 298.1L619.2 300.9L618.6 300.9L618.6 298.2L618.0 298.2L618.0 298.3L617.4 298.3L617.4 299.3L616.8 299.3L616.8 300.3L616.2 300.3L616.2 300.6L615.6 300.6L615.6 299.5L615.0 299.5L615.0 299.9L614.4 299.9L614.4 298.6L613.8 298.6L613.8 299.2L613.2 299.2L613.2 299.4L612.6 299.4L612.6 299.3L612.0 299.3L612.0 299.4L611.4 299.4L611.4 300.4L610.8 300.4L610.8 299.3L610.2 299.3L610.2 299.8L609.6 299.8L609.6 300.7L609.0 300.7L609.0 300.1L608.4 300.1L608.4 298.6L607.8 298.6L607.8 299.5L607.2 299.5L607.2 299.7L606.6 299.7L606.6 300.6L606.0 300.6L606.0 299.2L605.4 299.2L605.4 300.0L604.8 300.0L604.8 299.2L604.2 299.2L604.2 299.4L603.6 299.4L603.6 299.2L603.0 299.2L603.0 298.2L602.4 298.2L602.4 299.4L601.8 299.4L601.8 298.3L601.2 298.3L601.2 299.2L600.6 299.2L600.6 299.3L600.0 299.3L600.0 299.0L599.4 299.0L599.4 299.2L598.8 299.2L598.8 299.9L598.2 299.9L598.2 300.0L597.6 300.0L597.6 298.7L597.0 298.7L597.0 299.1L596.4 299.1L596.4 299.3L595.8 299.3L595.8 298.2L595.2 298.2L595.2 299.5L594.6 299.5L594.6 299.0L594.0 299.0L594.0 298.8L593.4 298.8L593.4 298.4L592.8 298.4L592.8 299.9L592.2 299.9L592.2 299.4L591.6 299.4L591.6 299.3L591.0 299.3L591.0 299.3L590.4 299.3L590.4 300.1L589.8 300.1L589.8 298.6L589.2 298.6L589.2 298.2L588.6 298.2L588.6 298.7L588.0 298.7L588.0 297.7L587.4 297.7L587.4 298.9L586.8 298.9L586.8 299.7L586.2 299.7L586.2 299.1L585.6 299.1L585.6 298.1L585.0 298.1L585.0 299.6L584.4 299.6L584.4 298.5L583.8 298.5L583.8 299.2L583.2 299.2L583.2 300.2L582.6 300.2L582.6 298.8L582.0 298.8L582.0 298.8L581.4 298.8L581.4 299.1L580.8 299.1L580.8 299.1L580.2 299.1L580.2 299.9L579.6 299.9L579.6 299.4L579.0 299.4L579.0 300.5L578.4 300.5L578.4 299.7L577.8 299.7L577.8 300.3L577.2 300.3L577.2 300.0L576.6 300.0L576.6 299.2L576.0 299.2L576.0 297.8L575.4 297.8L575.4 299.0L574.8 299.0L574.8 299.6L574.2 299.6L574.2 297.7L573.6 297.7L573.6 297.8L573.0 297.8L573.0 299.1L572.4 299.1L572.4 299.9L571.8 299.9L571.8 301.1L571.2 301.1L571.2 299.9L570.6 299.9L570.6 300.0L570.0 300.0L570.0 298.7L569.4 298.7L569.4 299.8L568.8 299.8L568.8 299.2L568.2 299.2L568.2 299.6L567.6 299.6L567.6 300.4L567.0 300.4L567.0 298.0L566.4 298.0L566.4 299.8L565.8 299.8L565.8 297.7L565.2 297.7L565.2 298.7L564.6 298.7L564.6 298.9L564.0 298.9L564.0 299.3L563.4 299.3L563.4 298.9L562.8 298.9L562.8 298.1L562.2 298.1L562.2 298.8L561.6 298.8L561.6 300.2L561.0 300.2L561.0 298.5L560.4 298.5L560.4 300.2L559.8 300.2L559.8 301.1L559.2 301.1L559.2 301.6L558.6 301.6L558.6 302.0L558.0 302.0L558.0 300.8L557.4 300.8L557.4 304.2L556.8 304.2L556.8 302.1L556.2 302.1L556.2 303.9L555.6 303.9L555.6 302.2L555.0 302.2L555.0 305.4L554.4 305.4L554.4 305.8L553.8 305.8L553.8 302.9L553.2 302.9L553.2 298.1L552.6 298.1L552.6 297.6L552.0 297.6L552.0 296.5L551.4 296.5L551.4 296.6L550.8 296.6L550.8 296.6L550.2 296.6L550.2 297.1L549.6 297.1L549.6 295.6L549.0 295.6L549.0 296.4L548.4 296.4L548.4 295.9L547.8 295.9L547.8 297.0L547.2 297.0L547.2 296.5L546.6 296.5L546.6 296.0L546.0 296.0L546.0 296.5L545.4 296.5L545.4 295.8L544.8 295.8L544.8 295.6L544.2 295.6L544.2 296.0L543.6 296.0L543.6 297.2L543.0 297.2L543.0 297.5L542.4 297.5L542.4 298.0L541.8 298.0L541.8 297.4L541.2 297.4L541.2 296.7L540.6 296.7L540.6 295.1L540.0 295.1L540.0 295.3L539.4 295.3L539.4 294.6L538.8 294.6L538.8 294.9L538.2 294.9L538.2 294.7L537.6 294.7L537.6 294.6L537.0 294.6Z" fill="#0b5cb8"/>
<path d="M703.0 289.7L703.9 289.7L703.9 290.6L704.8 290.6L704.8 289.1L705.7 289.1L705.7 290.2L706.6 290.2L706.6 289.5L707.5 289.5L707.5 288.5L708.4 288.5L708.4 289.3L709.3 289.3L709.3 287.9L710.2 287.9L710.2 289.0L711.1 289.0L711.1 287.4L712.0 287.4L712.0 287.2L712.9 287.2L712.9 282.9L713.8 282.9L713.8 281.2L714.7 281.2L714.7 280.8L715.6 280.8L715.6 282.8L716.5 282.8L716.5 281.5L717.4 281.5L717.4 280.5L718.3 280.5L718.3 280.4L719.2 280.4L719.2 274.4L720.1 274.4L720.1 276.3L721.0 276.3L721.0 269.3L721.9 269.3L721.9 272.2L722.8 272.2L722.8 265.4L723.7 265.4L723.7 268.9L724.6 268.9L724.6 275.1L725.5 275.1L725.5 269.2L726.4 269.2L726.4 277.3L727.3 277.3L727.3 271.4L728.2 271.4L728.2 269.9L729.1 269.9L729.1 266.9L730.0 266.9L730.0 259.6L730.9 259.6L730.9 267.1L731.8 267.1L731.8 261.2L732.7 261.2L732.7 269.7L733.6 269.7L733.6 275.0L734.5 275.0L734.5 263.7L735.4 263.7L735.4 268.3L736.3 268.3L736.3 254.7L737.2 254.7L737.2 257.4L738.1 257.4L738.1 257.4L739.0 257.4L739.0 270.0L739.9 270.0L739.9 260.5L740.8 260.5L740.8 256.5L741.7 256.5L741.7 252.9L742.6 252.9L742.6 257.3L743.5 257.3L743.5 250.6L744.4 250.6L744.4 265.9L745.3 265.9L745.3 255.0L746.2 255.0L746.2 266.2L747.1 266.2L747.1 258.9L748.0 258.9L748.0 265.8L748.9 265.8L748.9 270.4L749.8 270.4L749.8 268.0L750.7 268.0L750.7 268.7L751.6 268.7L751.6 257.0L752.5 257.0L752.5 258.9L753.4 258.9L753.4 265.5L754.3 265.5L754.3 264.8L755.2 264.8L755.2 267.7L756.1 267.7L756.1 267.5L757.0 267.5L757.0 279.8L757.9 279.8L757.9 276.4L758.8 276.4L758.8 279.2L759.7 279.2L759.7 278.6L760.6 278.6L760.6 273.6L761.5 273.6L761.5 278.7L762.4 278.7L762.4 282.8L763.3 282.8L763.3 284.5L764.2 284.5L764.2 280.9L765.1 280.9L765.1 280.0L766.0 280.0L766.0 282.4L766.9 282.4L766.9 279.3L767.8 279.3L767.8 280.2L768.7 280.2L768.7 270.9L769.6 270.9L769.6 271.8L770.5 271.8L770.5 251.5L771.4 251.5L771.4 257.4L772.3 257.4L772.3 267.1L773.2 267.1L773.2 269.7L774.1 269.7L774.1 311.1L773.2 311.1L773.2 311.6L772.3 311.6L772.3 332.3L771.4 332.3L771.4 336.8L770.5 336.8L770.5 314.5L769.6 314.5L769.6 309.1L768.7 309.1L768.7 302.3L767.8 302.3L767.8 304.6L766.9 304.6L766.9 300.4L766.0 300.4L766.0 302.7L765.1 302.7L765.1 301.5L764.2 301.5L764.2 303.4L763.3 303.4L763.3 305.5L762.4 305.5L762.4 305.1L761.5 305.1L761.5 311.5L760.6 311.5L760.6 308.5L759.7 308.5L759.7 305.3L758.8 305.3L758.8 311.7L757.9 311.7L757.9 310.2L757.0 310.2L757.0 314.5L756.1 314.5L756.1 322.8L755.2 322.8L755.2 320.7L754.3 320.7L754.3 320.2L753.4 320.2L753.4 331.7L752.5 331.7L752.5 322.4L751.6 322.4L751.6 316.5L750.7 316.5L750.7 313.2L749.8 313.2L749.8 314.3L748.9 314.3L748.9 314.5L748.0 314.5L748.0 321.3L747.1 321.3L747.1 309.4L746.2 309.4L746.2 325.5L745.3 325.5L745.3 325.9L744.4 325.9L744.4 337.0L743.5 337.0L743.5 325.2L742.6 325.2L742.6 337.0L741.7 337.0L741.7 330.0L740.8 330.0L740.8 317.8L739.9 317.8L739.9 315.6L739.0 315.6L739.0 322.7L738.1 322.7L738.1 320.7L737.2 320.7L737.2 334.7L736.3 334.7L736.3 310.9L735.4 310.9L735.4 322.2L734.5 322.2L734.5 313.2L733.6 313.2L733.6 320.8L732.7 320.8L732.7 317.6L731.8 317.6L731.8 313.8L730.9 313.8L730.9 324.7L730.0 324.7L730.0 325.1L729.1 325.1L729.1 316.8L728.2 316.8L728.2 316.6L727.3 316.6L727.3 312.1L726.4 312.1L726.4 312.5L725.5 312.5L725.5 312.9L724.6 312.9L724.6 312.9L723.7 312.9L723.7 317.5L722.8 317.5L722.8 312.6L721.9 312.6L721.9 314.1L721.0 314.1L721.0 309.5L720.1 309.5L720.1 310.8L719.2 310.8L719.2 303.1L718.3 303.1L718.3 303.1L717.4 303.1L717.4 304.3L716.5 304.3L716.5 304.3L715.6 304.3L715.6 306.4L714.7 306.4L714.7 305.1L713.8 305.1L713.8 304.3L712.9 304.3L712.9 297.4L712.0 297.4L712.0 296.2L711.1 296.2L711.1 297.1L710.2 297.1L710.2 298.1L709.3 298.1L709.3 295.5L708.4 295.5L708.4 297.5L707.5 297.5L707.5 296.5L706.6 296.5L706.6 294.1L705.7 294.1L705.7 295.9L704.8 295.9L704.8 294.9L703.9 294.9L703.9 294.7L703.0 294.7Z" fill="#0b5cb8"/>
<!-- fades -->
<path d="M255 243.900H350.500L299 340Z" fill="#e0a82e" fill-opacity=".42"/>
<path d="M517.500 243.900H535V340Z" fill="#e0a82e" fill-opacity=".42"/>
<path d="M703.500 243.900H728L704.500 340Z" fill="#e0a82e" fill-opacity=".42"/>
<!-- handles -->
<rect x="292.500" y="243.900" width="6" height="98.100" fill="#fff" fill-opacity=".22"/>
<rect x="299.500" y="243.900" width="6" height="98.100" fill="#fff" fill-opacity=".22"/>
<rect x="298.300" y="243.900" width="1.400" height="96.600" fill="#e8d9a0" fill-opacity=".85"/>
<rect x="526.500" y="243.900" width="8.500" height="98.100" fill="#fff" fill-opacity=".2"/>
<rect x="537" y="243.900" width="8" height="98.100" fill="#fff" fill-opacity=".2"/>
<rect x="695" y="243.900" width="7.500" height="98.100" fill="#fff" fill-opacity=".2"/>
<rect x="703.500" y="243.900" width="7.500" height="98.100" fill="#fff" fill-opacity=".2"/>
<!-- track2 clips -->
<rect x="260.500" y="344.500" width="98.500" height="97.500" rx="3" fill="#04141c" stroke="#155545" stroke-width="1"/>
<rect x="505.500" y="344.500" width="248" height="97.500" rx="3" fill="#04141c" stroke="#155545" stroke-width="1"/>
<path d="M260.500 392.800H359M505.500 392.800H753.500" stroke="#2aad86" stroke-width="2"/>
<path d="M281.5 392.2L282.2 392.2L282.2 388.6L283.0 388.6L283.0 384.5L283.8 384.5L283.8 382.2L284.5 382.2L284.5 379.6L285.2 379.6L285.2 376.1L286.0 376.1L286.0 376.6L286.8 376.6L286.8 374.4L287.5 374.4L287.5 370.9L288.2 370.9L288.2 371.8L289.0 371.8L289.0 373.1L289.8 373.1L289.8 376.8L290.5 376.8L290.5 377.2L291.2 377.2L291.2 376.0L292.0 376.0L292.0 367.1L292.8 367.1L292.8 367.5L293.5 367.5L293.5 368.3L294.2 368.3L294.2 363.4L295.0 363.4L295.0 366.7L295.8 366.7L295.8 363.5L296.5 363.5L296.5 365.4L297.2 365.4L297.2 366.9L298.0 366.9L298.0 375.9L298.8 375.9L298.8 379.5L299.5 379.5L299.5 383.7L300.2 383.7L300.2 387.7L301.0 387.7L301.0 390.0L301.8 390.0L301.8 387.5L302.5 387.5L302.5 384.8L303.2 384.8L303.2 381.0L304.0 381.0L304.0 378.4L304.8 378.4L304.8 376.6L305.5 376.6L305.5 374.4L306.2 374.4L306.2 370.5L307.0 370.5L307.0 366.9L307.8 366.9L307.8 364.8L308.5 364.8L308.5 368.8L309.2 368.8L309.2 371.3L310.0 371.3L310.0 373.2L310.8 373.2L310.8 374.4L311.5 374.4L311.5 376.1L312.2 376.1L312.2 379.3L313.0 379.3L313.0 380.3L313.8 380.3L313.8 381.5L314.5 381.5L314.5 382.8L315.2 382.8L315.2 383.3L316.0 383.3L316.0 385.3L316.8 385.3L316.8 386.1L317.5 386.1L317.5 387.5L318.2 387.5L318.2 388.3L319.0 388.3L319.0 389.1L319.8 389.1L319.8 390.0L320.5 390.0L320.5 390.9L321.2 390.9L321.2 391.3L322.0 391.3L322.0 391.8L322.8 391.8L322.8 393.7L322.0 393.7L322.0 394.1L321.2 394.1L321.2 394.7L320.5 394.7L320.5 395.8L319.8 395.8L319.8 396.7L319.0 396.7L319.0 397.1L318.2 397.1L318.2 398.4L317.5 398.4L317.5 399.9L316.8 399.9L316.8 399.8L316.0 399.8L316.0 403.2L315.2 403.2L315.2 402.5L314.5 402.5L314.5 405.3L313.8 405.3L313.8 404.5L313.0 404.5L313.0 407.1L312.2 407.1L312.2 409.7L311.5 409.7L311.5 411.9L310.8 411.9L310.8 411.7L310.0 411.7L310.0 413.0L309.2 413.0L309.2 418.7L308.5 418.7L308.5 420.9L307.8 420.9L307.8 419.5L307.0 419.5L307.0 414.4L306.2 414.4L306.2 411.2L305.5 411.2L305.5 407.8L304.8 407.8L304.8 408.3L304.0 408.3L304.0 404.5L303.2 404.5L303.2 400.6L302.5 400.6L302.5 398.2L301.8 398.2L301.8 395.7L301.0 395.7L301.0 397.8L300.2 397.8L300.2 401.8L299.5 401.8L299.5 407.3L298.8 407.3L298.8 408.1L298.0 408.1L298.0 420.2L297.2 420.2L297.2 420.7L296.5 420.7L296.5 423.1L295.8 423.1L295.8 416.3L295.0 416.3L295.0 424.7L294.2 424.7L294.2 415.3L293.5 415.3L293.5 420.4L292.8 420.4L292.8 416.5L292.0 416.5L292.0 410.0L291.2 410.0L291.2 408.9L290.5 408.9L290.5 408.8L289.8 408.8L289.8 414.1L289.0 414.1L289.0 415.4L288.2 415.4L288.2 416.7L287.5 416.7L287.5 411.9L286.8 411.9L286.8 408.3L286.0 408.3L286.0 409.7L285.2 409.7L285.2 406.2L284.5 406.2L284.5 402.5L283.8 402.5L283.8 400.9L283.0 400.9L283.0 396.8L282.2 396.8L282.2 393.4L281.5 393.4Z" fill="#0f8c69"/>
<path d="M523.5 392.2L524.2 392.2L524.2 385.1L525.0 385.1L525.0 385.9L525.8 385.9L525.8 386.1L526.5 386.1L526.5 384.9L527.2 384.9L527.2 386.0L528.0 386.0L528.0 384.8L528.8 384.8L528.8 375.6L529.5 375.6L529.5 368.9L530.2 368.9L530.2 368.7L531.0 368.7L531.0 369.0L531.8 369.0L531.8 366.9L532.5 366.9L532.5 366.7L533.2 366.7L533.2 367.5L534.0 367.5L534.0 364.9L534.8 364.9L534.8 363.4L535.5 363.4L535.5 363.2L536.2 363.2L536.2 368.2L537.0 368.2L537.0 368.9L537.8 368.9L537.8 370.8L538.5 370.8L538.5 384.4L539.2 384.4L539.2 383.7L540.0 383.7L540.0 383.3L540.8 383.3L540.8 373.8L541.5 373.8L541.5 371.6L542.2 371.6L542.2 373.7L543.0 373.7L543.0 369.8L543.8 369.8L543.8 371.2L544.5 371.2L544.5 374.6L545.2 374.6L545.2 374.6L546.0 374.6L546.0 374.9L546.8 374.9L546.8 376.8L547.5 376.8L547.5 378.0L548.2 378.0L548.2 380.2L549.0 380.2L549.0 384.4L549.8 384.4L549.8 388.0L550.5 388.0L550.5 389.0L551.2 389.0L551.2 389.7L552.0 389.7L552.0 384.1L552.8 384.1L552.8 381.7L553.5 381.7L553.5 381.3L554.2 381.3L554.2 379.9L555.0 379.9L555.0 378.9L555.8 378.9L555.8 379.9L556.5 379.9L556.5 381.0L557.2 381.0L557.2 382.8L558.0 382.8L558.0 384.2L558.8 384.2L558.8 384.4L559.5 384.4L559.5 385.6L560.2 385.6L560.2 386.2L561.0 386.2L561.0 388.1L561.8 388.1L561.8 388.8L562.5 388.8L562.5 389.7L563.2 389.7L563.2 390.2L564.0 390.2L564.0 390.3L564.8 390.3L564.8 390.0L565.5 390.0L565.5 384.1L566.2 384.1L566.2 379.0L567.0 379.0L567.0 374.9L567.8 374.9L567.8 369.8L568.5 369.8L568.5 372.5L569.2 372.5L569.2 373.5L570.0 373.5L570.0 375.7L570.8 375.7L570.8 378.3L571.5 378.3L571.5 378.3L572.2 378.3L572.2 378.9L573.0 378.9L573.0 379.8L573.8 379.8L573.8 381.1L574.5 381.1L574.5 381.3L575.2 381.3L575.2 382.7L576.0 382.7L576.0 382.1L576.8 382.1L576.8 382.7L577.5 382.7L577.5 384.0L578.2 384.0L578.2 384.8L579.0 384.8L579.0 385.8L579.8 385.8L579.8 387.0L580.5 387.0L580.5 388.6L581.2 388.6L581.2 389.8L582.0 389.8L582.0 389.6L582.8 389.6L582.8 388.9L583.5 388.9L583.5 388.0L584.2 388.0L584.2 388.2L585.0 388.2L585.0 387.6L585.8 387.6L585.8 386.0L586.5 386.0L586.5 387.1L587.2 387.1L587.2 387.1L588.0 387.1L588.0 387.8L588.8 387.8L588.8 388.4L589.5 388.4L589.5 389.6L590.2 389.6L590.2 391.2L591.0 391.2L591.0 391.8L591.8 391.8L591.8 391.8L592.5 391.8L592.5 391.8L593.2 391.8L593.2 391.9L594.0 391.9L594.0 382.2L594.8 382.2L594.8 380.6L595.5 380.6L595.5 378.5L596.2 378.5L596.2 379.2L597.0 379.2L597.0 382.0L597.8 382.0L597.8 383.6L598.5 383.6L598.5 386.7L599.2 386.7L599.2 388.7L600.0 388.7L600.0 383.5L600.8 383.5L600.8 376.6L601.5 376.6L601.5 376.2L602.2 376.2L602.2 373.1L603.0 373.1L603.0 372.8L603.8 372.8L603.8 371.9L604.5 371.9L604.5 372.3L605.2 372.3L605.2 375.6L606.0 375.6L606.0 376.7L606.8 376.7L606.8 382.3L607.5 382.3L607.5 387.0L608.2 387.0L608.2 378.1L609.0 378.1L609.0 375.5L609.8 375.5L609.8 373.9L610.5 373.9L610.5 368.3L611.2 368.3L611.2 370.0L612.0 370.0L612.0 371.2L612.8 371.2L612.8 374.4L613.5 374.4L613.5 377.7L614.2 377.7L614.2 383.2L615.0 383.2L615.0 381.6L615.8 381.6L615.8 376.0L616.5 376.0L616.5 376.9L617.2 376.9L617.2 377.1L618.0 377.1L618.0 376.2L618.8 376.2L618.8 376.8L619.5 376.8L619.5 380.3L620.2 380.3L620.2 385.4L621.0 385.4L621.0 382.9L621.8 382.9L621.8 377.4L622.5 377.4L622.5 379.1L623.2 379.1L623.2 376.4L624.0 376.4L624.0 377.5L624.8 377.5L624.8 375.3L625.5 375.3L625.5 375.7L626.2 375.7L626.2 374.8L627.0 374.8L627.0 377.1L627.8 377.1L627.8 376.9L628.5 376.9L628.5 375.7L629.2 375.7L629.2 377.2L630.0 377.2L630.0 375.9L630.8 375.9L630.8 376.4L631.5 376.4L631.5 379.8L632.2 379.8L632.2 382.2L633.0 382.2L633.0 384.5L633.8 384.5L633.8 384.8L634.5 384.8L634.5 384.8L635.2 384.8L635.2 372.0L636.0 372.0L636.0 369.0L636.8 369.0L636.8 364.0L637.5 364.0L637.5 367.7L638.2 367.7L638.2 369.1L639.0 369.1L639.0 370.3L639.8 370.3L639.8 373.6L640.5 373.6L640.5 375.0L641.2 375.0L641.2 375.6L642.0 375.6L642.0 379.1L642.8 379.1L642.8 379.4L643.5 379.4L643.5 382.5L644.2 382.5L644.2 383.6L645.0 383.6L645.0 385.5L645.8 385.5L645.8 386.1L646.5 386.1L646.5 386.9L647.2 386.9L647.2 387.6L648.0 387.6L648.0 387.8L648.8 387.8L648.8 388.6L649.5 388.6L649.5 389.5L650.2 389.5L650.2 389.6L651.0 389.6L651.0 390.4L651.8 390.4L651.8 391.1L652.5 391.1L652.5 391.4L653.2 391.4L653.2 391.4L654.0 391.4L654.0 391.2L654.8 391.2L654.8 385.2L655.5 385.2L655.5 374.6L656.2 374.6L656.2 369.1L657.0 369.1L657.0 370.7L657.8 370.7L657.8 372.5L658.5 372.5L658.5 373.9L659.2 373.9L659.2 377.4L660.0 377.4L660.0 380.3L660.8 380.3L660.8 383.1L661.5 383.1L661.5 384.5L662.2 384.5L662.2 386.8L663.0 386.8L663.0 387.9L663.8 387.9L663.8 390.3L664.5 390.3L664.5 390.5L665.2 390.5L665.2 389.9L666.0 389.9L666.0 389.1L666.8 389.1L666.8 388.0L667.5 388.0L667.5 387.2L668.2 387.2L668.2 386.9L669.0 386.9L669.0 386.1L669.8 386.1L669.8 385.9L670.5 385.9L670.5 386.6L671.2 386.6L671.2 386.3L672.0 386.3L672.0 386.5L672.8 386.5L672.8 387.4L673.5 387.4L673.5 387.2L674.2 387.2L674.2 388.5L675.0 388.5L675.0 389.2L675.8 389.2L675.8 389.4L676.5 389.4L676.5 387.6L677.2 387.6L677.2 384.2L678.0 384.2L678.0 383.2L678.8 383.2L678.8 383.6L679.5 383.6L679.5 382.4L680.2 382.4L680.2 382.2L681.0 382.2L681.0 383.0L681.8 383.0L681.8 383.1L682.5 383.1L682.5 383.0L683.2 383.0L683.2 382.2L684.0 382.2L684.0 383.7L684.8 383.7L684.8 383.9L685.5 383.9L685.5 383.7L686.2 383.7L686.2 383.6L687.0 383.6L687.0 382.7L687.8 382.7L687.8 384.2L688.5 384.2L688.5 383.3L689.2 383.3L689.2 383.0L690.0 383.0L690.0 384.3L690.8 384.3L690.8 384.7L691.5 384.7L691.5 385.4L692.2 385.4L692.2 385.8L693.0 385.8L693.0 385.5L693.8 385.5L693.8 386.1L694.5 386.1L694.5 385.0L695.2 385.0L695.2 379.1L696.0 379.1L696.0 380.8L696.8 380.8L696.8 381.1L697.5 381.1L697.5 381.0L698.2 381.0L698.2 380.0L699.0 380.0L699.0 381.3L699.8 381.3L699.8 381.9L700.5 381.9L700.5 382.2L701.2 382.2L701.2 382.9L702.0 382.9L702.0 383.3L702.8 383.3L702.8 383.9L703.5 383.9L703.5 384.7L704.2 384.7L704.2 384.5L705.0 384.5L705.0 385.8L705.8 385.8L705.8 386.1L706.5 386.1L706.5 387.1L707.2 387.1L707.2 387.7L708.0 387.7L708.0 388.6L708.8 388.6L708.8 389.2L709.5 389.2L709.5 389.8L710.2 389.8L710.2 390.4L711.0 390.4L711.0 391.2L711.8 391.2L711.8 391.8L712.5 391.8L712.5 392.0L713.2 392.0L713.2 392.0L714.0 392.0L714.0 391.9L714.8 391.9L714.8 391.7L715.5 391.7L715.5 390.8L716.2 390.8L716.2 390.2L717.0 390.2L717.0 389.0L717.8 389.0L717.8 388.5L718.5 388.5L718.5 388.7L719.2 388.7L719.2 387.3L720.0 387.3L720.0 387.9L720.8 387.9L720.8 388.1L721.5 388.1L721.5 388.6L722.2 388.6L722.2 389.1L723.0 389.1L723.0 390.2L723.8 390.2L723.8 390.4L724.5 390.4L724.5 391.0L725.2 391.0L725.2 391.5L726.0 391.5L726.0 392.0L726.8 392.0L726.8 392.1L727.5 392.1L727.5 391.9L728.2 391.9L728.2 392.0L729.0 392.0L729.0 387.8L729.8 387.8L729.8 387.7L730.5 387.7L730.5 398.0L729.8 398.0L729.8 397.7L729.0 397.7L729.0 393.5L728.2 393.5L728.2 393.7L727.5 393.7L727.5 393.5L726.8 393.5L726.8 393.6L726.0 393.6L726.0 394.2L725.2 394.2L725.2 394.8L724.5 394.8L724.5 395.0L723.8 395.0L723.8 395.4L723.0 395.4L723.0 396.1L722.2 396.1L722.2 396.7L721.5 396.7L721.5 397.5L720.8 397.5L720.8 397.5L720.0 397.5L720.0 398.3L719.2 398.3L719.2 396.7L718.5 396.7L718.5 397.4L717.8 397.4L717.8 396.9L717.0 396.9L717.0 395.5L716.2 395.5L716.2 394.8L715.5 394.8L715.5 394.0L714.8 394.0L714.8 393.7L714.0 393.7L714.0 393.5L713.2 393.5L713.2 393.7L712.5 393.7L712.5 393.7L711.8 393.7L711.8 394.2L711.0 394.2L711.0 395.4L710.2 395.4L710.2 395.8L709.5 395.8L709.5 396.4L708.8 396.4L708.8 396.9L708.0 396.9L708.0 397.9L707.2 397.9L707.2 398.7L706.5 398.7L706.5 399.9L705.8 399.9L705.8 399.6L705.0 399.6L705.0 401.0L704.2 401.0L704.2 400.2L703.5 400.2L703.5 401.9L702.8 401.9L702.8 401.4L702.0 401.4L702.0 402.3L701.2 402.3L701.2 403.1L700.5 403.1L700.5 403.9L699.8 403.9L699.8 404.2L699.0 404.2L699.0 406.0L698.2 406.0L698.2 404.1L697.5 404.1L697.5 405.0L696.8 405.0L696.8 403.8L696.0 403.8L696.0 407.5L695.2 407.5L695.2 401.3L694.5 401.3L694.5 398.8L693.8 398.8L693.8 400.3L693.0 400.3L693.0 400.4L692.2 400.4L692.2 400.5L691.5 400.5L691.5 401.3L690.8 401.3L690.8 401.1L690.0 401.1L690.0 403.2L689.2 403.2L689.2 401.8L688.5 401.8L688.5 401.2L687.8 401.2L687.8 403.2L687.0 403.2L687.0 402.7L686.2 402.7L686.2 401.8L685.5 401.8L685.5 402.5L684.8 402.5L684.8 402.1L684.0 402.1L684.0 402.9L683.2 402.9L683.2 402.9L682.5 402.9L682.5 403.1L681.8 403.1L681.8 402.2L681.0 402.2L681.0 402.9L680.2 402.9L680.2 402.8L679.5 402.8L679.5 402.4L678.8 402.4L678.8 403.0L678.0 403.0L678.0 400.6L677.2 400.6L677.2 398.0L676.5 398.0L676.5 396.4L675.8 396.4L675.8 396.1L675.0 396.1L675.0 396.8L674.2 396.8L674.2 398.8L673.5 398.8L673.5 398.0L672.8 398.0L672.8 399.3L672.0 399.3L672.0 398.7L671.2 398.7L671.2 398.8L670.5 398.8L670.5 399.6L669.8 399.6L669.8 399.8L669.0 399.8L669.0 398.5L668.2 398.5L668.2 398.7L667.5 398.7L667.5 398.0L666.8 398.0L666.8 396.9L666.0 396.9L666.0 395.7L665.2 395.7L665.2 394.9L664.5 394.9L664.5 395.5L663.8 395.5L663.8 397.8L663.0 397.8L663.0 398.9L662.2 398.9L662.2 401.1L661.5 401.1L661.5 402.6L660.8 402.6L660.8 406.4L660.0 406.4L660.0 407.7L659.2 407.7L659.2 410.5L658.5 410.5L658.5 413.3L657.8 413.3L657.8 415.9L657.0 415.9L657.0 416.9L656.2 416.9L656.2 411.9L655.5 411.9L655.5 400.5L654.8 400.5L654.8 394.5L654.0 394.5L654.0 394.2L653.2 394.2L653.2 394.3L652.5 394.3L652.5 394.7L651.8 394.7L651.8 395.1L651.0 395.1L651.0 395.8L650.2 395.8L650.2 396.1L649.5 396.1L649.5 397.2L648.8 397.2L648.8 398.3L648.0 398.3L648.0 398.3L647.2 398.3L647.2 398.9L646.5 398.9L646.5 399.7L645.8 399.7L645.8 400.7L645.0 400.7L645.0 401.6L644.2 401.6L644.2 403.5L643.5 403.5L643.5 406.9L642.8 406.9L642.8 407.6L642.0 407.6L642.0 409.9L641.2 409.9L641.2 410.5L640.5 410.5L640.5 413.1L639.8 413.1L639.8 415.0L639.0 415.0L639.0 415.6L638.2 415.6L638.2 417.5L637.5 417.5L637.5 421.3L636.8 421.3L636.8 418.0L636.0 418.0L636.0 415.3L635.2 415.3L635.2 400.7L634.5 400.7L634.5 401.4L633.8 401.4L633.8 400.8L633.0 400.8L633.0 404.5L632.2 404.5L632.2 406.0L631.5 406.0L631.5 410.2L630.8 410.2L630.8 408.4L630.0 408.4L630.0 408.0L629.2 408.0L629.2 408.2L628.5 408.2L628.5 407.2L627.8 407.2L627.8 409.3L627.0 409.3L627.0 411.2L626.2 411.2L626.2 410.4L625.5 410.4L625.5 411.1L624.8 411.1L624.8 407.8L624.0 407.8L624.0 409.0L623.2 409.0L623.2 405.8L622.5 405.8L622.5 406.9L621.8 406.9L621.8 403.7L621.0 403.7L621.0 399.6L620.2 399.6L620.2 405.2L619.5 405.2L619.5 409.3L618.8 409.3L618.8 408.8L618.0 408.8L618.0 409.2L617.2 409.2L617.2 408.9L616.5 408.9L616.5 408.2L615.8 408.2L615.8 403.3L615.0 403.3L615.0 403.3L614.2 403.3L614.2 407.2L613.5 407.2L613.5 412.7L612.8 412.7L612.8 414.6L612.0 414.6L612.0 416.5L611.2 416.5L611.2 415.6L610.5 415.6L610.5 411.6L609.8 411.6L609.8 409.8L609.0 409.8L609.0 407.9L608.2 407.9L608.2 398.7L607.5 398.7L607.5 402.3L606.8 402.3L606.8 408.3L606.0 408.3L606.0 410.2L605.2 410.2L605.2 412.3L604.5 412.3L604.5 413.6L603.8 413.6L603.8 414.4L603.0 414.4L603.0 412.4L602.2 412.4L602.2 408.7L601.5 408.7L601.5 409.8L600.8 409.8L600.8 402.3L600.0 402.3L600.0 396.8L599.2 396.8L599.2 399.5L598.5 399.5L598.5 402.8L597.8 402.8L597.8 403.9L597.0 403.9L597.0 405.8L596.2 405.8L596.2 407.1L595.5 407.1L595.5 405.7L594.8 405.7L594.8 402.8L594.0 402.8L594.0 393.6L593.2 393.6L593.2 393.7L592.5 393.7L592.5 393.8L591.8 393.8L591.8 393.9L591.0 393.9L591.0 394.5L590.2 394.5L590.2 396.2L589.5 396.2L589.5 396.8L588.8 396.8L588.8 397.4L588.0 397.4L588.0 399.1L587.2 399.1L587.2 398.7L586.5 398.7L586.5 399.3L585.8 399.3L585.8 398.6L585.0 398.6L585.0 397.6L584.2 397.6L584.2 397.7L583.5 397.7L583.5 397.0L582.8 397.0L582.8 396.2L582.0 396.2L582.0 395.8L581.2 395.8L581.2 397.4L580.5 397.4L580.5 398.4L579.8 398.4L579.8 399.3L579.0 399.3L579.0 401.2L578.2 401.2L578.2 402.1L577.5 402.1L577.5 403.7L576.8 403.7L576.8 404.1L576.0 404.1L576.0 402.3L575.2 402.3L575.2 403.9L574.5 403.9L574.5 405.4L573.8 405.4L573.8 405.7L573.0 405.7L573.0 407.9L572.2 407.9L572.2 407.1L571.5 407.1L571.5 408.5L570.8 408.5L570.8 410.8L570.0 410.8L570.0 411.2L569.2 411.2L569.2 411.4L568.5 411.4L568.5 414.9L567.8 414.9L567.8 411.2L567.0 411.2L567.0 406.6L566.2 406.6L566.2 401.5L565.5 401.5L565.5 395.6L564.8 395.6L564.8 395.3L564.0 395.3L564.0 395.3L563.2 395.3L563.2 396.2L562.5 396.2L562.5 396.8L561.8 396.8L561.8 397.7L561.0 397.7L561.0 399.2L560.2 399.2L560.2 399.5L559.5 399.5L559.5 400.8L558.8 400.8L558.8 400.8L558.0 400.8L558.0 403.7L557.2 403.7L557.2 403.8L556.5 403.8L556.5 406.6L555.8 406.6L555.8 406.0L555.0 406.0L555.0 405.3L554.2 405.3L554.2 404.4L553.5 404.4L553.5 404.1L552.8 404.1L552.8 401.2L552.0 401.2L552.0 396.0L551.2 396.0L551.2 396.5L550.5 396.5L550.5 397.4L549.8 397.4L549.8 400.9L549.0 400.9L549.0 404.6L548.2 404.6L548.2 408.0L547.5 408.0L547.5 409.8L546.8 409.8L546.8 408.9L546.0 408.9L546.0 411.9L545.2 411.9L545.2 409.7L544.5 409.7L544.5 414.0L543.8 414.0L543.8 413.8L543.0 413.8L543.0 413.8L542.2 413.8L542.2 413.8L541.5 413.8L541.5 412.2L540.8 412.2L540.8 403.2L540.0 403.2L540.0 401.6L539.2 401.6L539.2 400.9L538.5 400.9L538.5 414.8L537.8 414.8L537.8 417.9L537.0 417.9L537.0 415.2L536.2 415.2L536.2 420.2L535.5 420.2L535.5 422.3L534.8 422.3L534.8 421.1L534.0 421.1L534.0 418.3L533.2 418.3L533.2 417.2L532.5 417.2L532.5 416.3L531.8 416.3L531.8 414.9L531.0 414.9L531.0 419.1L530.2 419.1L530.2 414.8L529.5 414.8L529.5 409.8L528.8 409.8L528.8 401.2L528.0 401.2L528.0 399.9L527.2 399.9L527.2 400.3L526.5 400.3L526.5 399.8L525.8 399.8L525.8 400.3L525.0 400.3L525.0 401.1L524.2 401.1L524.2 393.4L523.5 393.4Z" fill="#0f8c69"/>
<rect x="260.500" y="344.500" width="7.500" height="97.500" rx="2" fill="#fff" fill-opacity=".2"/>
<rect x="351.500" y="344.500" width="7.500" height="97.500" rx="2" fill="#fff" fill-opacity=".2"/>
<rect x="505.500" y="344.500" width="7.500" height="97.500" rx="2" fill="#fff" fill-opacity=".2"/>
<rect x="746" y="344.500" width="7.500" height="97.500" rx="2" fill="#fff" fill-opacity=".2"/>
</svg>
<!-- grid lines -->
<g stroke="#273446" stroke-width="1"><path d="M0 239.500H774M0 339.500H774M0 439.500H774M0 539.500H774"/></g>
<text x="293.800" y="224" font-family="Liberation Mono, monospace" font-size="10.400" textLength="23.500" lengthAdjust="spacingAndGlyphs" fill="#9aa8bc" stroke="#9aa8bc" stroke-width=".25">0:10</text>
<g font-family="Liberation Sans, sans-serif" font-size="10.900" fill="#d6dce5">
<text x="302.500" y="255.600">youtube-Bxtlor1SZ00</text>
<text x="541.300" y="255.600">youtube-Bxtlor1SZ00</text>
<text x="707" y="255.600">youtube-Bxtlor1SZ00</text>
<text x="263.700" y="355.800" font-size="10.500">Subway 2</text>
<text x="509" y="355.800" font-size="10.500">Subway 3</text>
</g>
</svg>
<!-- scrollbars -->
<div class="abs" style="left:774px;top:210px;width:14px;height:443px;background:#fafafa;border-left:1px solid #e8e8e8"></div>
<div class="abs" style="left:178px;top:638px;width:610px;height:15px;background:#fafafa;border-top:1px solid #e8e8e8"></div>
<div class="abs" style="left:778px;top:213px;width:7.800px;height:340px;border-radius:4px;background:#c1c1c1"></div>
<div class="abs" style="left:288px;top:641.500px;width:165px;height:8px;border-radius:4px;background:#c1c1c1"></div>
<!-- status -->
<div id="status" class="abs"></div>
<div class="t st" style="left:10.500px">3 tracks</div>
<div class="t st" style="left:64.700px">0:31</div>
<div class="t st" style="left:99px">50px/s</div>
<div class="t st" style="left:146.300px">44.1 kHz</div>
<div class="t st" style="right:11.500px" id="dev">Developed by <b>CNerd Inc / LandWorks Services LLC</b> by <b>Michael Kintner</b> <span style="color:#2c3a52;padding:0 3px">|</span> <span style="font-size:10.600px;color:#42516c">v1.16.4</span></div>

</div>
</body></html>
